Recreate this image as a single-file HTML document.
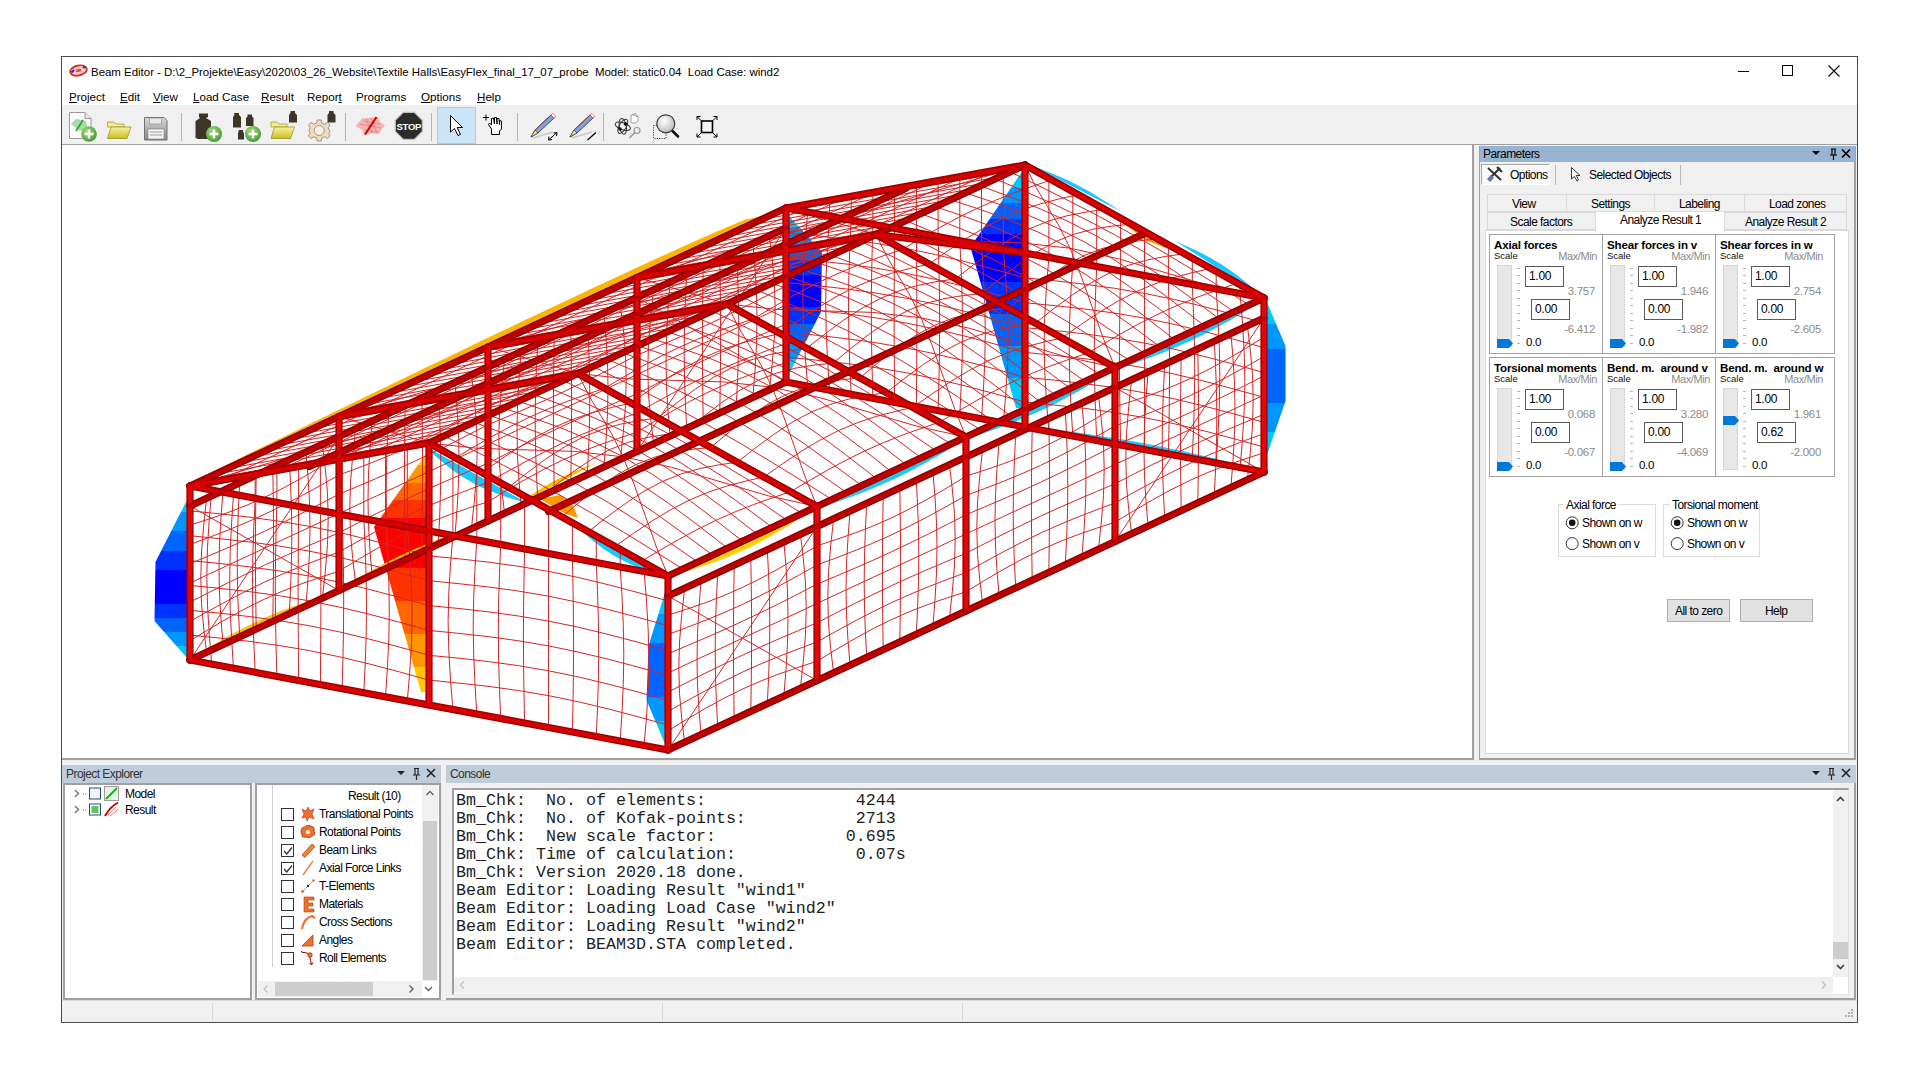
<!DOCTYPE html>
<html><head><meta charset="utf-8">
<style>
*{box-sizing:border-box;margin:0;padding:0}
html,body{width:1920px;height:1080px;overflow:hidden;background:#fff;font-family:"Liberation Sans",sans-serif;color:#000}
.a{position:absolute}
#win{position:absolute;left:61px;top:56px;width:1797px;height:967px;border:1px solid #4a4a4a;background:#f0f0f0}
.t{position:absolute;white-space:nowrap;font-size:11.6px;line-height:14px}
.n{position:absolute;white-space:nowrap;font-size:12px;line-height:14px;letter-spacing:-0.55px}
.u{text-decoration:underline}
.sep{position:absolute;top:115px;width:1px;height:24px;background:#b4b4b4}
.dockt{position:absolute;background:#bfcddb;height:17px}
.box{position:absolute;background:#fff;border-top:2px solid #a0a0a0;border-left:2px solid #a0a0a0;border-right:1px solid #e3e3e3;border-bottom:1px solid #e3e3e3}
.grp{position:absolute;border:1px solid #a0a0a0;border-radius:0}
.inp{position:absolute;width:39px;height:21px;border:1px solid #5a5a5a;background:#fff;font-size:12px;line-height:19px;padding-left:3px;letter-spacing:-0.3px}
.gr{color:#8c8c8c}
.trk{position:absolute;width:15px;height:82px;background:#e7e7e7;border:1px solid #d6d6d6}
.cb{position:absolute;width:13px;height:13px;border:1px solid #333;background:#fff}
.mono{position:absolute;font-family:"Liberation Mono",monospace;font-size:16.67px;line-height:18px;white-space:pre;color:#1e1e1e}
</style></head><body>
<div id="win"></div>
<!-- title + menu white -->
<div class="a" style="left:62px;top:57px;width:1795px;height:48px;background:#fff"></div>
<!-- app icon -->
<svg class="a" style="left:69px;top:64px" width="19" height="13" viewBox="0 0 19 13">
<ellipse cx="9.5" cy="6.5" rx="8.5" ry="5" fill="#f4c8c8" stroke="#e02010" stroke-width="1.6" transform="rotate(-12 9.5 6.5)"/>
<path d="M2.5 8.5 L5 6 M14 4 L16.5 2.5" stroke="#1030d0" stroke-width="2"/>
<ellipse cx="9.5" cy="6.5" rx="3" ry="1.5" fill="#e85050" transform="rotate(-12 9.5 6.5)"/>
</svg>
<div class="t" style="left:91px;top:65px;font-size:11.45px">Beam Editor - D:\2_Projekte\Easy\2020\03_26_Website\Textile Halls\EasyFlex_final_17_07_probe&nbsp; Model: static0.04&nbsp; Load Case: wind2</div>
<!-- window controls -->
<div class="a" style="left:1738px;top:71px;width:11px;height:1px;background:#000"></div>
<div class="a" style="left:1782px;top:65px;width:11px;height:11px;border:1px solid #000"></div>
<svg class="a" style="left:1828px;top:65px" width="12" height="12"><path d="M0.5 0.5 L11.5 11.5 M11.5 0.5 L0.5 11.5" stroke="#000" stroke-width="1.1"/></svg>
<!-- menu -->
<div class="t" style="left:69px;top:90px"><span class="u">P</span>roject</div>
<div class="t" style="left:120px;top:90px"><span class="u">E</span>dit</div>
<div class="t" style="left:153px;top:90px"><span class="u">V</span>iew</div>
<div class="t" style="left:193px;top:90px"><span class="u">L</span>oad Case</div>
<div class="t" style="left:261px;top:90px"><span class="u">R</span>esult</div>
<div class="t" style="left:307px;top:90px">Repor<span class="u">t</span></div>
<div class="t" style="left:356px;top:90px">Pro<span class="u">g</span>rams</div>
<div class="t" style="left:421px;top:90px"><span class="u">O</span>ptions</div>
<div class="t" style="left:477px;top:90px"><span class="u">H</span>elp</div>
<!-- toolbar separators -->
<div class="sep" style="left:181px;top:113px;height:28px"></div>
<div class="sep" style="left:345px;top:113px;height:28px"></div>
<div class="sep" style="left:431px;top:113px;height:28px"></div>
<div class="sep" style="left:517px;top:113px;height:28px"></div>
<div class="sep" style="left:603px;top:113px;height:28px"></div>
<div class="a" style="left:437px;top:107px;width:39px;height:37px;background:#cce4f7;border:1px solid #99d1ff"></div>
<svg class="a" style="left:0;top:0" width="740" height="146" viewBox="0 0 740 146">
<defs>
<radialGradient id="gp" cx="40%" cy="35%" r="70%"><stop offset="0" stop-color="#a8dc88"/><stop offset="1" stop-color="#3f9a2a"/></radialGradient>
<linearGradient id="fy" x1="0" y1="0" x2="0" y2="1"><stop offset="0" stop-color="#f8f4a0"/><stop offset="1" stop-color="#c8c020"/></linearGradient>
<linearGradient id="fl" x1="0" y1="0" x2="0" y2="1"><stop offset="0" stop-color="#d8d8d8"/><stop offset="1" stop-color="#8a8a8a"/></linearGradient>
<radialGradient id="mg" cx="40%" cy="35%" r="70%"><stop offset="0" stop-color="#ffffff"/><stop offset="1" stop-color="#b8b8b8"/></radialGradient>
</defs>
<!-- new -->
<path d="M69.5 112.5 H85 L91 118.5 V138.5 H69.5 Z" fill="#fdfdfd" stroke="#9a9a9a" stroke-width="1"/>
<path d="M85 112.5 V118.5 H91" fill="#e8e8e8" stroke="#9a9a9a" stroke-width="1"/>
<path d="M71 124 L76 119 L86 121 L88 128 L80 131 Z" fill="#9ad89a" opacity="0.9"/>
<path d="M76 131 L83 120" stroke="#3a9a3a" stroke-width="1.6"/>
<circle cx="89" cy="134" r="7.8" fill="url(#gp)"/>
<path d="M89 129.5 V138.5 M84.5 134 H93.5" stroke="#fff" stroke-width="2.4"/>
<!-- open -->
<path d="M107.5 122 H114 L116 124 H124 V127 H107.5 Z" fill="#f0ec90" stroke="#a8a040" stroke-width="0.8"/>
<path d="M107.5 138.5 L111 127 H131 L127 138.5 Z" fill="url(#fy)" stroke="#9a9420" stroke-width="0.8"/>
<!-- save -->
<path d="M144.5 117.5 H164 L167 120.5 V140 H144.5 Z" fill="url(#fl)" stroke="#707070" stroke-width="1"/>
<rect x="149.5" y="118" width="12" height="6" fill="#e8e8e8" stroke="#888" stroke-width="0.6"/>
<rect x="148" y="129" width="16" height="10" fill="#f4f4f4" stroke="#777" stroke-width="0.6"/>
<path d="M150 132 H162 M150 135 H162" stroke="#888" stroke-width="0.8"/>
<!-- weight + -->
<path d="M199 113.5 H208 V117 L206 118 L211 121 V138 L207 139 H198 L195.5 138 V121 L200 118 L199 117 Z" fill="#3e3528"/>
<circle cx="214" cy="134" r="8" fill="url(#gp)"/>
<path d="M214 129.5 V138.5 M209.5 134 H218.5" stroke="#fff" stroke-width="2.4"/>
<!-- weights + -->
<path d="M234 113 H239 V115 L241 117 V127.5 H233 V117 L234.5 115 Z" fill="#3e3528"/>
<path d="M247.5 114.5 H252 V116.5 L253.5 118 V126 H246 V118 L247.5 116.5 Z" fill="#3e3528"/>
<path d="M239 130 H243 V132 L244 133 V139.5 H238 V133 Z" fill="#3e3528"/>
<circle cx="253" cy="134" r="8" fill="url(#gp)"/>
<path d="M253 129.5 V138.5 M248.5 134 H257.5" stroke="#fff" stroke-width="2.4"/>
<!-- folder + weight -->
<path d="M271 122 H277 L279 124 H287 V127 H271 Z" fill="#f0ec90" stroke="#a8a040" stroke-width="0.8"/>
<path d="M271 138.5 L274.5 127 H294.5 L290.5 138.5 Z" fill="url(#fy)" stroke="#9a9420" stroke-width="0.8"/>
<path d="M290.5 111 H295 V113 L297 115 V122.5 H289 V115 L290.5 113 Z" fill="#3e3528"/>
<!-- gear + weight -->
<g transform="translate(319.2 130.5)" fill="#ecdcc4" stroke="#a88a68" stroke-width="0.9">
<path d="M-2 -10.5 H2 L2.6 -7.4 L5.6 -6.2 L8.2 -8 L10.8 -5.4 L9 -2.8 L10.2 0.2 L10.5 2 L9.5 3 L10.8 5.4 L8.2 8 L5.6 6.2 L2.6 7.4 L2 10.5 H-2 L-2.6 7.4 L-5.6 6.2 L-8.2 8 L-10.8 5.4 L-9 2.6 L-10.2 0 L-9 -2.8 L-10.8 -5.4 L-8.2 -8 L-5.6 -6.2 L-2.6 -7.4 Z"/>
<circle r="5" fill="#f0f0f0"/>
</g>
<path d="M329 111 H333.5 V113 L335.5 115 V122.5 H327.5 V115 L329 113 Z" fill="#3e3528"/>
<!-- membrane -->
<path d="M355.5 126 L362 118.5 L372 117.5 L378.5 117 L380 122 L385 125.5 L381 130 L379 134 L370 133.5 L364 135 L362 130 Z" fill="#f5a8a8" opacity="0.85"/>
<path d="M360 124 L381 128 M363 121 L380 124 M365 130 L378 132 M366 119 L372 133 M371 118 L377 133" stroke="#e06060" stroke-width="0.5"/>
<path d="M365 134.5 L376.5 117" stroke="#d00000" stroke-width="2"/>
<!-- stop -->
<path d="M403.3 112.3 H414.3 L422.3 120.3 V131.3 L414.3 139.3 H403.3 L395.3 131.3 V120.3 Z" fill="#2b2b2b" stroke="#bdbdbd" stroke-width="1.2"/>
<text x="408.8" y="130" font-family="Liberation Sans" font-weight="bold" font-size="9.5" fill="#fff" text-anchor="middle" letter-spacing="-0.3">STOP</text>
<!-- arrow -->
<path d="M450.5 115.5 V132 L454.5 128.5 L458 135.5 L460.5 134.5 L457.2 127.5 L462.5 127.5 Z" fill="#fff" stroke="#000" stroke-width="1"/>
<!-- hand -->
<path d="M483 117.5 H489 M486 114.5 V120.5" stroke="#000" stroke-width="1"/>
<path d="M491.5 134.5 V129 L488.5 124.5 L489.5 123 L491.5 125 V118.5 L493.5 118 L494.5 124 V117.5 L496.5 117.5 L497 124 V118.5 L499 118.5 L499.5 124.5 V120.5 L501.5 121 V129 L499.5 131 V134.5 Z" fill="#fff" stroke="#000" stroke-width="1"/>
<!-- pencils -->
<g>
<path d="M531 137 L535 130 L551 115 L554 118 L538 133 Z" fill="#7fa0d8" stroke="#303030" stroke-width="0.8"/>
<path d="M535 130 L550.5 115.5" stroke="#b03030" stroke-width="0.9"/>
<path d="M531 137 L538 133 L535 130 Z" fill="#e8d8a0" stroke="#303030" stroke-width="0.6"/>
<path d="M551 115 L553 113.5 L556 116.5 L554 118 Z" fill="#fff" stroke="#c03030" stroke-width="0.6"/>
<path d="M533 138 L553 132" stroke="#c8c8c8" stroke-width="1.6"/>
<path d="M548.5 140 L557 132.5 M548.5 140 L549 136.5 M548.5 140 L552 139.6 M557 132.5 L553.5 133 M557 132.5 L556.6 136" stroke="#000" stroke-width="1"/>
</g>
<g transform="translate(39 0)">
<path d="M531 137 L535 130 L551 115 L554 118 L538 133 Z" fill="#7fa0d8" stroke="#303030" stroke-width="0.8"/>
<path d="M535 130 L550.5 115.5" stroke="#b03030" stroke-width="0.9"/>
<path d="M531 137 L538 133 L535 130 Z" fill="#e8d8a0" stroke="#303030" stroke-width="0.6"/>
<path d="M551 115 L553 113.5 L556 116.5 L554 118 Z" fill="#fff" stroke="#c03030" stroke-width="0.6"/>
<path d="M533 138 L553 132" stroke="#c8c8c8" stroke-width="1.6"/>
<path d="M548.5 140 L557 132.5" stroke="#000" stroke-width="1.2"/>
</g>
<!-- orbit -->
<g fill="none" stroke="#333" stroke-width="1">
<ellipse cx="622.8" cy="126.3" rx="8" ry="3.5" transform="rotate(20 622.8 126.3)"/>
<ellipse cx="622.8" cy="126.3" rx="8" ry="3.5" transform="rotate(-60 622.8 126.3)"/>
<ellipse cx="622.8" cy="126.3" rx="8" ry="3.5" transform="rotate(80 622.8 126.3)"/>
</g>
<circle cx="625.5" cy="124" r="1.8" fill="#111"/><circle cx="620" cy="129" r="1.8" fill="#111"/>
<path d="M631 122 V116 L632.5 114 L634 116 V113.5 L636 114 V116.5 L638 116 V121 L636 123 H632 Z" fill="#fff" stroke="#777" stroke-width="0.7"/>
<circle cx="637" cy="130.5" r="3" fill="none" stroke="#999" stroke-width="1.2"/>
<path d="M635 132.5 L629.5 138" stroke="#999" stroke-width="1.4"/>
<!-- zoom -->
<rect x="653.5" y="125.5" width="12.5" height="13" fill="none" stroke="#333" stroke-width="0.9" stroke-dasharray="1.2 1.2"/>
<path d="M671.5 130 L678 136.5" stroke="#111" stroke-width="2.6" stroke-linecap="round"/>
<circle cx="665.8" cy="123.8" r="9" fill="url(#mg)" stroke="#3a3a3a" stroke-width="1.2"/>
<!-- fit -->
<rect x="701.5" y="121" width="11" height="11.5" fill="#f4f4f4" stroke="#000" stroke-width="1.6"/>
<path d="M701 120.5 L697 116.5 M697 116.5 V120 M697 116.5 H700.5 M713 120.5 L717 116.5 M717 116.5 V120 M717 116.5 H713.5 M701 133 L697 137 M697 137 V133.5 M697 137 H700.5 M713 133 L717 137 M717 137 V133.5 M717 137 H713.5" stroke="#000" stroke-width="1"/>
</svg>
<!-- toolbar bottom line -->
<div class="a" style="left:62px;top:144px;width:1795px;height:1px;background:#a0a0a0"></div>
<!-- viewport -->
<div class="a" style="left:62px;top:145px;width:1412px;height:615px;background:#fff;border-right:2px solid #a0a0a0;border-bottom:2px solid #a0a0a0"></div>
<svg class="a" style="left:0;top:0" width="1474" height="760" viewBox="0 0 1474 760">
<defs><linearGradient id="dA" gradientUnits="userSpaceOnUse" x1="190.0" y1="492.0" x2="190.0" y2="660.0"><stop offset="0.0000" stop-color="#00c8ff"/><stop offset="0.1167" stop-color="#00c8ff"/><stop offset="0.1167" stop-color="#0096ff"/><stop offset="0.2333" stop-color="#0096ff"/><stop offset="0.2333" stop-color="#0064ff"/><stop offset="0.3500" stop-color="#0064ff"/><stop offset="0.3500" stop-color="#0032ff"/><stop offset="0.4667" stop-color="#0032ff"/><stop offset="0.4667" stop-color="#0000ff"/><stop offset="0.5833" stop-color="#0000ff"/><stop offset="0.5833" stop-color="#0000ff"/><stop offset="0.6667" stop-color="#0000ff"/><stop offset="0.6667" stop-color="#0032ff"/><stop offset="0.7500" stop-color="#0032ff"/><stop offset="0.7500" stop-color="#0064ff"/><stop offset="0.8333" stop-color="#0064ff"/><stop offset="0.8333" stop-color="#0096ff"/><stop offset="0.9167" stop-color="#0096ff"/><stop offset="0.9167" stop-color="#00c8ff"/><stop offset="1.0000" stop-color="#00c8ff"/></linearGradient>
<linearGradient id="dR" gradientUnits="userSpaceOnUse" x1="430.0" y1="448.0" x2="430.0" y2="700.0"><stop offset="0.0000" stop-color="#ffc800"/><stop offset="0.0690" stop-color="#ffc800"/><stop offset="0.0690" stop-color="#ff9600"/><stop offset="0.1381" stop-color="#ff9600"/><stop offset="0.1381" stop-color="#ff6400"/><stop offset="0.2071" stop-color="#ff6400"/><stop offset="0.2071" stop-color="#ff3200"/><stop offset="0.2762" stop-color="#ff3200"/><stop offset="0.2762" stop-color="#ff0000"/><stop offset="0.3452" stop-color="#ff0000"/><stop offset="0.3452" stop-color="#ff0000"/><stop offset="0.4762" stop-color="#ff0000"/><stop offset="0.4762" stop-color="#ff3200"/><stop offset="0.6071" stop-color="#ff3200"/><stop offset="0.6071" stop-color="#ff6400"/><stop offset="0.7381" stop-color="#ff6400"/><stop offset="0.7381" stop-color="#ff9600"/><stop offset="0.8690" stop-color="#ff9600"/><stop offset="0.8690" stop-color="#ffc800"/><stop offset="1.0000" stop-color="#ffc800"/></linearGradient>
<linearGradient id="dD" gradientUnits="userSpaceOnUse" x1="668.0" y1="585.0" x2="668.0" y2="746.0"><stop offset="0.0000" stop-color="#00c8ff"/><stop offset="0.1801" stop-color="#00c8ff"/><stop offset="0.1801" stop-color="#0096ff"/><stop offset="0.3602" stop-color="#0096ff"/><stop offset="0.3602" stop-color="#0064ff"/><stop offset="0.5404" stop-color="#0064ff"/><stop offset="0.5404" stop-color="#0064ff"/><stop offset="0.6936" stop-color="#0064ff"/><stop offset="0.6936" stop-color="#0096ff"/><stop offset="0.8468" stop-color="#0096ff"/><stop offset="0.8468" stop-color="#00c8ff"/><stop offset="1.0000" stop-color="#00c8ff"/></linearGradient>
<linearGradient id="dF" gradientUnits="userSpaceOnUse" x1="1264.0" y1="298.0" x2="1264.0" y2="460.0"><stop offset="0.0000" stop-color="#00c8ff"/><stop offset="0.1584" stop-color="#00c8ff"/><stop offset="0.1584" stop-color="#0096ff"/><stop offset="0.3169" stop-color="#0096ff"/><stop offset="0.3169" stop-color="#0064ff"/><stop offset="0.4753" stop-color="#0064ff"/><stop offset="0.4753" stop-color="#0064ff"/><stop offset="0.6502" stop-color="#0064ff"/><stop offset="0.6502" stop-color="#0096ff"/><stop offset="0.8251" stop-color="#0096ff"/><stop offset="0.8251" stop-color="#00c8ff"/><stop offset="1.0000" stop-color="#00c8ff"/></linearGradient>
<linearGradient id="dH" gradientUnits="userSpaceOnUse" x1="786.0" y1="214.0" x2="786.0" y2="376.0"><stop offset="0.0000" stop-color="#00c8ff"/><stop offset="0.0938" stop-color="#00c8ff"/><stop offset="0.0938" stop-color="#0096ff"/><stop offset="0.1877" stop-color="#0096ff"/><stop offset="0.1877" stop-color="#0064ff"/><stop offset="0.2815" stop-color="#0064ff"/><stop offset="0.2815" stop-color="#0032ff"/><stop offset="0.3753" stop-color="#0032ff"/><stop offset="0.3753" stop-color="#0000ff"/><stop offset="0.4691" stop-color="#0000ff"/><stop offset="0.4691" stop-color="#0000ff"/><stop offset="0.5753" stop-color="#0000ff"/><stop offset="0.5753" stop-color="#0032ff"/><stop offset="0.6815" stop-color="#0032ff"/><stop offset="0.6815" stop-color="#0064ff"/><stop offset="0.7877" stop-color="#0064ff"/><stop offset="0.7877" stop-color="#0096ff"/><stop offset="0.8938" stop-color="#0096ff"/><stop offset="0.8938" stop-color="#00c8ff"/><stop offset="1.0000" stop-color="#00c8ff"/></linearGradient>
<linearGradient id="dG" gradientUnits="userSpaceOnUse" x1="1022.0" y1="172.0" x2="1022.0" y2="410.0"><stop offset="0.0000" stop-color="#00c8ff"/><stop offset="0.0655" stop-color="#00c8ff"/><stop offset="0.0655" stop-color="#0096ff"/><stop offset="0.1311" stop-color="#0096ff"/><stop offset="0.1311" stop-color="#0064ff"/><stop offset="0.1966" stop-color="#0064ff"/><stop offset="0.1966" stop-color="#0032ff"/><stop offset="0.2622" stop-color="#0032ff"/><stop offset="0.2622" stop-color="#0000ff"/><stop offset="0.3277" stop-color="#0000ff"/><stop offset="0.3277" stop-color="#0000ff"/><stop offset="0.4622" stop-color="#0000ff"/><stop offset="0.4622" stop-color="#0032ff"/><stop offset="0.5966" stop-color="#0032ff"/><stop offset="0.5966" stop-color="#0064ff"/><stop offset="0.7311" stop-color="#0064ff"/><stop offset="0.7311" stop-color="#0096ff"/><stop offset="0.8655" stop-color="#0096ff"/><stop offset="0.8655" stop-color="#00c8ff"/><stop offset="1.0000" stop-color="#00c8ff"/></linearGradient></defs>
<polygon points="190,494 155.5,562 154.5,621 187,658 191,658" fill="url(#dA)"/>
<polygon points="430,448 374,527 421,692 430,692" fill="url(#dR)"/>
<polygon points="667,586 648.5,646 646.5,700 665,744 668,744" fill="url(#dD)"/>
<polygon points="1266,300 1285.5,346 1285.5,401 1266,458" fill="url(#dF)"/>
<polygon points="789,216 822,252 821,312 789,374" fill="url(#dH)"/>
<polygon points="1021,173 970.5,247 1016,408 1023,408 1023,173" fill="url(#dG)"/>
<polygon points="200.9,478.2 214.9,471.6 228.9,465.1 242.9,458.6 256.9,452.0 270.9,445.5 284.9,439.0 298.9,432.4 312.9,425.9 326.9,419.4 340.9,412.8 354.9,406.3 368.9,399.8 382.9,393.2 396.9,386.7 411.0,380.2 425.0,373.6 439.0,367.1 453.0,360.6 467.0,354.0 481.0,347.5 495.0,341.0 509.0,334.4 523.0,327.9 537.0,321.4 551.0,314.8 565.0,308.3 579.0,301.8 593.0,295.3 607.0,288.7 621.0,282.2 635.0,275.7 649.1,269.1 663.1,262.6 677.1,256.1 691.1,249.5 705.1,243.0 719.1,236.5 733.1,229.9 747.1,223.4 761.1,216.9 760.9,216.4 745.3,219.6 731.0,225.4 716.8,231.5 702.6,237.7 688.5,244.0 674.4,250.4 660.4,256.8 646.3,263.3 632.3,269.7 618.3,276.2 604.3,282.8 590.3,289.3 576.3,295.9 562.3,302.5 548.3,309.1 534.3,315.7 520.4,322.3 506.4,328.9 492.5,335.6 478.5,342.3 464.6,349.0 450.7,355.7 436.7,362.4 422.8,369.1 408.9,375.8 395.0,382.5 381.1,389.3 367.2,396.0 353.3,402.8 339.4,409.5 325.5,416.3 311.6,423.1 297.7,429.9 283.8,436.7 270.0,443.5 256.1,450.3 242.2,457.1 228.3,464.0 214.5,470.8 200.7,477.7" fill="#ffb400"/>
<polygon points="201.9,651.4 212.7,645.0 223.6,638.7 234.5,632.7 245.6,626.9 256.8,621.4 268.3,616.3 279.8,611.5 291.5,607.1 303.3,602.8 315.2,598.6" fill="#ffc000"/>
<polygon points="350.9,581.9 361.3,576.1 371.6,570.3 382.1,564.7 392.6,559.3 403.3,554.2 414.1,549.3 425.0,544.7 436.0,540.3 447.1,536.1 458.2,531.9" fill="#ffc000"/>
<polygon points="423.0,445.0 432.2,453.3 441.5,461.3 451.1,468.9 461.0,475.9 471.4,482.1 482.1,487.6 493.3,492.3 504.8,496.4 516.6,500.1 528.5,503.5" fill="#18c8ff"/>
<polygon points="573.5,523.5 581.0,530.5 588.7,537.3 596.6,543.8 604.7,549.8 613.2,555.3 622.0,560.1 631.2,564.4 640.6,568.2 650.2,571.7 660.0,575.0" fill="#18c8ff"/>
<polygon points="514.0,507.0 521.6,501.5 529.3,496.1 537.1,490.9 545.0,486.0 553.1,481.5 561.4,477.2 569.9,473.3 578.5,469.7 587.2,466.3 596.0,463.0" fill="#ffc000"/>
<polygon points="540,499 560,495 572,503 578,518 566,514 552,506" fill="#ff9a00"/>
<polygon points="828.9,504.9 842.0,500.2 854.9,495.4 867.8,490.4 880.6,485.0 893.2,479.4 905.6,473.4 917.9,467.0 930.0,460.4 942.1,453.5 954.1,446.6" fill="#18c8ff"/>
<polygon points="977.9,435.4 991.0,430.7 1003.9,425.9 1016.8,420.9 1029.6,415.5 1042.2,409.9 1054.6,403.9 1066.9,397.5 1079.0,390.9 1091.1,384.0 1103.1,377.1" fill="#18c8ff"/>
<polygon points="1126.9,365.9 1140.0,361.2 1152.9,356.4 1165.8,351.4 1178.6,346.0 1191.2,340.4 1203.6,334.4 1215.9,328.0 1228.0,321.4 1240.1,314.5 1252.1,307.6" fill="#18c8ff"/>
<polygon points="685.9,571.7 697.9,567.8 709.8,563.8 721.6,559.5 733.2,554.8 744.6,549.8 755.8,544.3 766.9,538.4 777.7,532.1 788.4,525.5 799.1,518.8" fill="#ffd000"/>
<polygon points="1033.0,166.0 1042.2,169.5 1051.3,173.2 1060.4,177.0 1069.3,181.0 1078.1,185.4 1086.7,190.0 1095.2,195.0 1103.5,200.2 1111.8,205.5 1120.0,211.0" fill="#18c8ff"/>
<polygon points="1175.0,241.0 1184.5,245.2 1194.0,249.5 1203.3,254.1 1212.3,259.0 1221.2,264.3 1229.7,270.0 1238.1,276.1 1246.2,282.5 1254.1,289.2 1262.0,296.0" fill="#18c8ff"/>
<polygon points="1118,219 1140,225 1168,249 1145,240" fill="#ff9600"/>
<polygon points="1048.9,428.5 1068.2,431.2 1087.5,434.0 1106.7,436.9 1125.9,440.1 1145.1,443.6 1164.1,447.3 1183.2,451.3 1202.2,455.6 1221.2,460.0 1240.1,464.5" fill="#18c8ff"/>
<g stroke="#d42424" stroke-width="1" fill="none">
<polyline points="206.6,652.3 203.7,628.0 201.5,603.3 200.8,578.0 201.5,552.0 203.7,525.3 206.6,498.3"/>
<polyline points="223.1,644.6 221.0,619.9 219.5,594.9 219.0,569.5 219.5,543.6 221.0,517.2 223.1,490.6"/>
<polyline points="239.7,636.8 238.4,611.7 237.5,586.5 237.2,561.0 237.5,535.2 238.4,509.1 239.7,482.8"/>
<polyline points="256.2,629.1 255.8,603.6 255.5,578.1 255.4,552.5 255.5,526.8 255.8,501.0 256.2,475.1"/>
<polyline points="272.8,621.4 273.2,595.5 273.5,569.7 273.6,544.0 273.5,518.4 273.2,492.9 272.8,467.4"/>
<polyline points="289.3,613.7 290.6,587.4 291.5,561.3 291.8,535.5 291.5,510.0 290.6,484.8 289.3,459.7"/>
<polyline points="305.9,605.9 308.0,579.3 309.5,552.9 310.0,527.0 309.5,501.6 308.0,476.6 305.9,451.9"/>
<polyline points="322.4,598.2 325.3,571.2 327.5,544.5 328.2,518.5 327.5,493.2 325.3,468.5 322.4,444.2"/>
<polyline points="190.0,640.8 208.6,629.4 227.2,618.5 245.9,608.3 264.5,599.1 283.1,590.9 301.8,583.7 320.4,577.3 339.0,571.2"/>
<polyline points="190.0,621.5 208.6,611.0 227.2,600.9 245.9,591.2 264.5,582.1 283.1,573.8 301.8,566.1 320.4,558.9 339.0,552.0"/>
<polyline points="190.0,602.2 208.6,592.7 227.2,583.2 245.9,574.1 264.5,565.2 283.1,556.7 301.8,548.5 320.4,540.6 339.0,532.8"/>
<polyline points="190.0,583.0 208.6,574.3 227.2,565.6 245.9,556.9 264.5,548.2 283.1,539.6 301.8,530.9 320.4,522.2 339.0,513.5"/>
<polyline points="190.0,563.8 208.6,555.9 227.2,548.0 245.9,539.8 264.5,531.3 283.1,522.4 301.8,513.3 320.4,503.8 339.0,494.2"/>
<polyline points="190.0,544.5 208.6,537.6 227.2,530.4 245.9,522.7 264.5,514.4 283.1,505.3 301.8,495.6 320.4,485.5 339.0,475.0"/>
<polyline points="190.0,525.2 208.6,519.2 227.2,512.8 245.9,505.6 264.5,497.4 283.1,488.2 301.8,478.0 320.4,467.1 339.0,455.8"/>
<polyline points="190.0,660.0 339.0,436.5"/>
<polyline points="190.0,506.0 339.0,590.5"/>
<polyline points="355.6,582.8 352.7,558.5 350.5,533.8 349.8,508.5 350.5,482.5 352.7,455.8 355.6,428.8"/>
<polyline points="372.1,575.1 370.0,550.4 368.5,525.4 368.0,500.0 368.5,474.1 370.0,447.7 372.1,421.1"/>
<polyline points="388.7,567.3 387.4,542.2 386.5,517.0 386.2,491.5 386.5,465.7 387.4,439.6 388.7,413.3"/>
<polyline points="405.2,559.6 404.8,534.1 404.5,508.6 404.4,483.0 404.5,457.3 404.8,431.5 405.2,405.6"/>
<polyline points="421.8,551.9 422.2,526.0 422.5,500.2 422.6,474.5 422.5,448.9 422.2,423.4 421.8,397.9"/>
<polyline points="438.3,544.2 439.6,517.9 440.5,491.8 440.8,466.0 440.5,440.5 439.6,415.3 438.3,390.2"/>
<polyline points="454.9,536.4 457.0,509.8 458.5,483.4 459.0,457.5 458.5,432.1 457.0,407.1 454.9,382.4"/>
<polyline points="471.4,528.7 474.3,501.7 476.5,475.0 477.2,449.0 476.5,423.7 474.3,399.0 471.4,374.7"/>
<polyline points="339.0,571.2 357.6,559.9 376.2,549.0 394.9,538.8 413.5,529.6 432.1,521.4 450.8,514.2 469.4,507.8 488.0,501.8"/>
<polyline points="339.0,552.0 357.6,541.5 376.2,531.4 394.9,521.7 413.5,512.6 432.1,504.3 450.8,496.6 469.4,489.4 488.0,482.5"/>
<polyline points="339.0,532.8 357.6,523.2 376.2,513.7 394.9,504.6 413.5,495.7 432.1,487.2 450.8,479.0 469.4,471.1 488.0,463.2"/>
<polyline points="339.0,513.5 357.6,504.8 376.2,496.1 394.9,487.4 413.5,478.8 432.1,470.1 450.8,461.4 469.4,452.7 488.0,444.0"/>
<polyline points="339.0,494.2 357.6,486.4 376.2,478.5 394.9,470.3 413.5,461.8 432.1,452.9 450.8,443.8 469.4,434.3 488.0,424.8"/>
<polyline points="339.0,475.0 357.6,468.1 376.2,460.9 394.9,453.2 413.5,444.9 432.1,435.8 450.8,426.1 469.4,416.0 488.0,405.5"/>
<polyline points="339.0,455.8 357.6,449.7 376.2,443.3 394.9,436.1 413.5,427.9 432.1,418.7 450.8,408.5 469.4,397.6 488.0,386.2"/>
<polyline points="504.6,513.3 501.7,489.0 499.5,464.3 498.8,439.0 499.5,413.0 501.7,386.3 504.6,359.3"/>
<polyline points="521.1,505.6 519.0,480.9 517.5,455.9 517.0,430.5 517.5,404.6 519.0,378.2 521.1,351.6"/>
<polyline points="537.7,497.8 536.4,472.7 535.5,447.5 535.2,422.0 535.5,396.2 536.4,370.1 537.7,343.8"/>
<polyline points="554.2,490.1 553.8,464.6 553.5,439.1 553.4,413.5 553.5,387.8 553.8,362.0 554.2,336.1"/>
<polyline points="570.8,482.4 571.2,456.5 571.5,430.7 571.6,405.0 571.5,379.4 571.2,353.9 570.8,328.4"/>
<polyline points="587.3,474.7 588.6,448.4 589.5,422.3 589.8,396.5 589.5,371.0 588.6,345.8 587.3,320.7"/>
<polyline points="603.9,466.9 606.0,440.3 607.5,413.9 608.0,388.0 607.5,362.6 606.0,337.6 603.9,312.9"/>
<polyline points="620.4,459.2 623.3,432.2 625.5,405.5 626.2,379.5 625.5,354.2 623.3,329.5 620.4,305.2"/>
<polyline points="488.0,501.8 506.6,490.4 525.2,479.5 543.9,469.3 562.5,460.1 581.1,451.9 599.8,444.7 618.4,438.3 637.0,432.2"/>
<polyline points="488.0,482.5 506.6,472.0 525.2,461.9 543.9,452.2 562.5,443.1 581.1,434.8 599.8,427.1 618.4,419.9 637.0,413.0"/>
<polyline points="488.0,463.2 506.6,453.7 525.2,444.2 543.9,435.1 562.5,426.2 581.1,417.7 599.8,409.5 618.4,401.6 637.0,393.8"/>
<polyline points="488.0,444.0 506.6,435.3 525.2,426.6 543.9,417.9 562.5,409.2 581.1,400.6 599.8,391.9 618.4,383.2 637.0,374.5"/>
<polyline points="488.0,424.8 506.6,416.9 525.2,409.0 543.9,400.8 562.5,392.3 581.1,383.4 599.8,374.3 618.4,364.8 637.0,355.2"/>
<polyline points="488.0,405.5 506.6,398.6 525.2,391.4 543.9,383.7 562.5,375.4 581.1,366.3 599.8,356.6 618.4,346.5 637.0,336.0"/>
<polyline points="488.0,386.2 506.6,380.2 525.2,373.8 543.9,366.6 562.5,358.4 581.1,349.2 599.8,339.0 618.4,328.1 637.0,316.8"/>
<polyline points="653.6,443.8 650.7,419.5 648.5,394.8 647.8,369.5 648.5,343.5 650.7,316.8 653.6,289.8"/>
<polyline points="670.1,436.1 668.0,411.4 666.5,386.4 666.0,361.0 666.5,335.1 668.0,308.7 670.1,282.1"/>
<polyline points="686.7,428.3 685.4,403.2 684.5,378.0 684.2,352.5 684.5,326.7 685.4,300.6 686.7,274.3"/>
<polyline points="703.2,420.6 702.8,395.1 702.5,369.6 702.4,344.0 702.5,318.3 702.8,292.5 703.2,266.6"/>
<polyline points="719.8,412.9 720.2,387.0 720.5,361.2 720.6,335.5 720.5,309.9 720.2,284.4 719.8,258.9"/>
<polyline points="736.3,405.2 737.6,378.9 738.5,352.8 738.8,327.0 738.5,301.5 737.6,276.3 736.3,251.2"/>
<polyline points="752.9,397.4 755.0,370.8 756.5,344.4 757.0,318.5 756.5,293.1 755.0,268.1 752.9,243.4"/>
<polyline points="769.4,389.7 772.3,362.7 774.5,336.0 775.2,310.0 774.5,284.7 772.3,260.0 769.4,235.7"/>
<polyline points="637.0,432.2 655.6,420.9 674.2,410.0 692.9,399.8 711.5,390.6 730.1,382.4 748.8,375.2 767.4,368.8 786.0,362.8"/>
<polyline points="637.0,413.0 655.6,402.5 674.2,392.4 692.9,382.7 711.5,373.6 730.1,365.3 748.8,357.6 767.4,350.4 786.0,343.5"/>
<polyline points="637.0,393.8 655.6,384.2 674.2,374.7 692.9,365.6 711.5,356.7 730.1,348.2 748.8,340.0 767.4,332.1 786.0,324.2"/>
<polyline points="637.0,374.5 655.6,365.8 674.2,357.1 692.9,348.4 711.5,339.8 730.1,331.1 748.8,322.4 767.4,313.7 786.0,305.0"/>
<polyline points="637.0,355.2 655.6,347.4 674.2,339.5 692.9,331.3 711.5,322.8 730.1,313.9 748.8,304.8 767.4,295.3 786.0,285.8"/>
<polyline points="637.0,336.0 655.6,329.1 674.2,321.9 692.9,314.2 711.5,305.9 730.1,296.8 748.8,287.1 767.4,277.0 786.0,266.5"/>
<polyline points="637.0,316.8 655.6,310.7 674.2,304.3 692.9,297.1 711.5,288.9 730.1,279.7 748.8,269.5 767.4,258.6 786.0,247.2"/>
<polyline points="637.0,451.5 786.0,228.0"/>
<polyline points="637.0,297.5 786.0,382.0"/>
<polyline points="684.6,742.3 681.7,718.0 679.5,693.3 678.8,668.0 679.5,642.0 681.7,615.3 684.6,588.3"/>
<polyline points="701.1,734.6 699.0,709.9 697.5,684.9 697.0,659.5 697.5,633.6 699.0,607.2 701.1,580.6"/>
<polyline points="717.7,726.8 716.4,701.7 715.5,676.5 715.2,651.0 715.5,625.2 716.4,599.1 717.7,572.8"/>
<polyline points="734.2,719.1 733.8,693.6 733.5,668.1 733.4,642.5 733.5,616.8 733.8,591.0 734.2,565.1"/>
<polyline points="750.8,711.4 751.2,685.5 751.5,659.7 751.6,634.0 751.5,608.4 751.2,582.9 750.8,557.4"/>
<polyline points="767.3,703.7 768.6,677.4 769.5,651.3 769.8,625.5 769.5,600.0 768.6,574.8 767.3,549.7"/>
<polyline points="783.9,695.9 786.0,669.3 787.5,642.9 788.0,617.0 787.5,591.6 786.0,566.6 783.9,541.9"/>
<polyline points="800.4,688.2 803.3,661.2 805.5,634.5 806.2,608.5 805.5,583.2 803.3,558.5 800.4,534.2"/>
<polyline points="668.0,730.8 686.6,719.4 705.2,708.5 723.9,698.3 742.5,689.1 761.1,680.9 779.8,673.7 798.4,667.3 817.0,661.2"/>
<polyline points="668.0,711.5 686.6,701.0 705.2,690.9 723.9,681.2 742.5,672.1 761.1,663.8 779.8,656.1 798.4,648.9 817.0,642.0"/>
<polyline points="668.0,692.2 686.6,682.7 705.2,673.2 723.9,664.1 742.5,655.2 761.1,646.7 779.8,638.5 798.4,630.6 817.0,622.8"/>
<polyline points="668.0,673.0 686.6,664.3 705.2,655.6 723.9,646.9 742.5,638.2 761.1,629.6 779.8,620.9 798.4,612.2 817.0,603.5"/>
<polyline points="668.0,653.8 686.6,645.9 705.2,638.0 723.9,629.8 742.5,621.3 761.1,612.4 779.8,603.3 798.4,593.8 817.0,584.2"/>
<polyline points="668.0,634.5 686.6,627.6 705.2,620.4 723.9,612.7 742.5,604.4 761.1,595.3 779.8,585.6 798.4,575.5 817.0,565.0"/>
<polyline points="668.0,615.2 686.6,609.2 705.2,602.8 723.9,595.6 742.5,587.4 761.1,578.2 779.8,568.0 798.4,557.1 817.0,545.8"/>
<polyline points="668.0,750.0 817.0,526.5"/>
<polyline points="668.0,596.0 817.0,680.5"/>
<polyline points="833.6,672.8 830.7,648.5 828.5,623.8 827.8,598.5 828.5,572.5 830.7,545.8 833.6,518.8"/>
<polyline points="850.1,665.1 848.0,640.4 846.5,615.4 846.0,590.0 846.5,564.1 848.0,537.7 850.1,511.1"/>
<polyline points="866.7,657.3 865.4,632.2 864.5,607.0 864.2,581.5 864.5,555.7 865.4,529.6 866.7,503.3"/>
<polyline points="883.2,649.6 882.8,624.1 882.5,598.6 882.4,573.0 882.5,547.3 882.8,521.5 883.2,495.6"/>
<polyline points="899.8,641.9 900.2,616.0 900.5,590.2 900.6,564.5 900.5,538.9 900.2,513.4 899.8,487.9"/>
<polyline points="916.3,634.2 917.6,607.9 918.5,581.8 918.8,556.0 918.5,530.5 917.6,505.3 916.3,480.2"/>
<polyline points="932.9,626.4 935.0,599.8 936.5,573.4 937.0,547.5 936.5,522.1 935.0,497.1 932.9,472.4"/>
<polyline points="949.4,618.7 952.3,591.7 954.5,565.0 955.2,539.0 954.5,513.7 952.3,489.0 949.4,464.7"/>
<polyline points="817.0,661.2 835.6,649.9 854.2,639.0 872.9,628.8 891.5,619.6 910.1,611.4 928.8,604.2 947.4,597.8 966.0,591.8"/>
<polyline points="817.0,642.0 835.6,631.5 854.2,621.4 872.9,611.7 891.5,602.6 910.1,594.3 928.8,586.6 947.4,579.4 966.0,572.5"/>
<polyline points="817.0,622.8 835.6,613.2 854.2,603.7 872.9,594.6 891.5,585.7 910.1,577.2 928.8,569.0 947.4,561.1 966.0,553.2"/>
<polyline points="817.0,603.5 835.6,594.8 854.2,586.1 872.9,577.4 891.5,568.8 910.1,560.1 928.8,551.4 947.4,542.7 966.0,534.0"/>
<polyline points="817.0,584.2 835.6,576.4 854.2,568.5 872.9,560.3 891.5,551.8 910.1,542.9 928.8,533.8 947.4,524.3 966.0,514.8"/>
<polyline points="817.0,565.0 835.6,558.1 854.2,550.9 872.9,543.2 891.5,534.9 910.1,525.8 928.8,516.1 947.4,506.0 966.0,495.5"/>
<polyline points="817.0,545.8 835.6,539.7 854.2,533.3 872.9,526.1 891.5,517.9 910.1,508.7 928.8,498.5 947.4,487.6 966.0,476.2"/>
<polyline points="982.6,603.3 979.7,579.0 977.5,554.3 976.8,529.0 977.5,503.0 979.7,476.3 982.6,449.3"/>
<polyline points="999.1,595.6 997.0,570.9 995.5,545.9 995.0,520.5 995.5,494.6 997.0,468.2 999.1,441.6"/>
<polyline points="1015.7,587.8 1014.4,562.7 1013.5,537.5 1013.2,512.0 1013.5,486.2 1014.4,460.1 1015.7,433.8"/>
<polyline points="1032.2,580.1 1031.8,554.6 1031.5,529.1 1031.4,503.5 1031.5,477.8 1031.8,452.0 1032.2,426.1"/>
<polyline points="1048.8,572.4 1049.2,546.5 1049.5,520.7 1049.6,495.0 1049.5,469.4 1049.2,443.9 1048.8,418.4"/>
<polyline points="1065.3,564.7 1066.6,538.4 1067.5,512.3 1067.8,486.5 1067.5,461.0 1066.6,435.8 1065.3,410.7"/>
<polyline points="1081.9,556.9 1084.0,530.3 1085.5,503.9 1086.0,478.0 1085.5,452.6 1084.0,427.6 1081.9,402.9"/>
<polyline points="1098.4,549.2 1101.3,522.2 1103.5,495.5 1104.2,469.5 1103.5,444.2 1101.3,419.5 1098.4,395.2"/>
<polyline points="966.0,591.8 984.6,580.4 1003.2,569.5 1021.9,559.3 1040.5,550.1 1059.1,541.9 1077.8,534.7 1096.4,528.3 1115.0,522.2"/>
<polyline points="966.0,572.5 984.6,562.0 1003.2,551.9 1021.9,542.2 1040.5,533.1 1059.1,524.8 1077.8,517.1 1096.4,509.9 1115.0,503.0"/>
<polyline points="966.0,553.2 984.6,543.7 1003.2,534.2 1021.9,525.1 1040.5,516.2 1059.1,507.7 1077.8,499.5 1096.4,491.6 1115.0,483.8"/>
<polyline points="966.0,534.0 984.6,525.3 1003.2,516.6 1021.9,507.9 1040.5,499.2 1059.1,490.6 1077.8,481.9 1096.4,473.2 1115.0,464.5"/>
<polyline points="966.0,514.8 984.6,506.9 1003.2,499.0 1021.9,490.8 1040.5,482.3 1059.1,473.4 1077.8,464.3 1096.4,454.8 1115.0,445.2"/>
<polyline points="966.0,495.5 984.6,488.6 1003.2,481.4 1021.9,473.7 1040.5,465.4 1059.1,456.3 1077.8,446.6 1096.4,436.5 1115.0,426.0"/>
<polyline points="966.0,476.2 984.6,470.2 1003.2,463.8 1021.9,456.6 1040.5,448.4 1059.1,439.2 1077.8,429.0 1096.4,418.1 1115.0,406.8"/>
<polyline points="1131.6,533.8 1128.7,509.5 1126.5,484.8 1125.8,459.5 1126.5,433.5 1128.7,406.8 1131.6,379.8"/>
<polyline points="1148.1,526.1 1146.0,501.4 1144.5,476.4 1144.0,451.0 1144.5,425.1 1146.0,398.7 1148.1,372.1"/>
<polyline points="1164.7,518.3 1163.4,493.2 1162.5,468.0 1162.2,442.5 1162.5,416.7 1163.4,390.6 1164.7,364.3"/>
<polyline points="1181.2,510.6 1180.8,485.1 1180.5,459.6 1180.4,434.0 1180.5,408.3 1180.8,382.5 1181.2,356.6"/>
<polyline points="1197.8,502.9 1198.2,477.0 1198.5,451.2 1198.6,425.5 1198.5,399.9 1198.2,374.4 1197.8,348.9"/>
<polyline points="1214.3,495.2 1215.6,468.9 1216.5,442.8 1216.8,417.0 1216.5,391.5 1215.6,366.3 1214.3,341.2"/>
<polyline points="1230.9,487.4 1233.0,460.8 1234.5,434.4 1235.0,408.5 1234.5,383.1 1233.0,358.1 1230.9,333.4"/>
<polyline points="1247.4,479.7 1250.3,452.7 1252.5,426.0 1253.2,400.0 1252.5,374.7 1250.3,350.0 1247.4,325.7"/>
<polyline points="1115.0,522.2 1133.6,510.9 1152.2,500.0 1170.9,489.8 1189.5,480.6 1208.1,472.4 1226.8,465.2 1245.4,458.8 1264.0,452.8"/>
<polyline points="1115.0,503.0 1133.6,492.5 1152.2,482.4 1170.9,472.7 1189.5,463.6 1208.1,455.3 1226.8,447.6 1245.4,440.4 1264.0,433.5"/>
<polyline points="1115.0,483.8 1133.6,474.2 1152.2,464.7 1170.9,455.6 1189.5,446.7 1208.1,438.2 1226.8,430.0 1245.4,422.1 1264.0,414.2"/>
<polyline points="1115.0,464.5 1133.6,455.8 1152.2,447.1 1170.9,438.4 1189.5,429.8 1208.1,421.1 1226.8,412.4 1245.4,403.7 1264.0,395.0"/>
<polyline points="1115.0,445.2 1133.6,437.4 1152.2,429.5 1170.9,421.3 1189.5,412.8 1208.1,403.9 1226.8,394.8 1245.4,385.3 1264.0,375.8"/>
<polyline points="1115.0,426.0 1133.6,419.1 1152.2,411.9 1170.9,404.2 1189.5,395.9 1208.1,386.8 1226.8,377.1 1245.4,367.0 1264.0,356.5"/>
<polyline points="1115.0,406.8 1133.6,400.7 1152.2,394.3 1170.9,387.1 1189.5,378.9 1208.1,369.7 1226.8,359.5 1245.4,348.6 1264.0,337.2"/>
<polyline points="1115.0,541.5 1264.0,318.0"/>
<polyline points="1115.0,387.5 1264.0,472.0"/>
<polyline points="211.7,664.1 209.3,634.6 207.5,605.3 206.8,576.2 207.5,547.3 209.3,518.6 211.7,490.1"/>
<polyline points="233.5,668.2 231.6,638.8 230.2,609.6 229.7,580.5 230.2,551.6 231.6,522.8 233.5,494.2"/>
<polyline points="255.2,672.3 253.8,643.0 252.8,613.8 252.5,584.8 252.8,555.8 253.8,527.0 255.2,498.3"/>
<polyline points="276.9,676.4 276.1,647.2 275.5,618.1 275.3,589.1 275.5,560.1 276.1,531.2 276.9,502.4"/>
<polyline points="298.6,680.5 298.4,651.4 298.2,622.4 298.1,593.4 298.2,564.4 298.4,535.4 298.6,506.5"/>
<polyline points="320.4,684.5 320.6,655.6 320.8,626.6 320.9,597.6 320.8,568.6 320.6,539.6 320.4,510.5"/>
<polyline points="342.1,688.6 342.9,659.8 343.5,630.9 343.7,601.9 343.5,572.9 342.9,543.8 342.1,514.6"/>
<polyline points="363.8,692.7 365.2,664.0 366.2,635.2 366.5,606.2 366.2,577.2 365.2,548.0 363.8,518.7"/>
<polyline points="385.5,696.8 387.4,668.2 388.8,639.4 389.3,610.5 388.8,581.4 387.4,552.2 385.5,522.8"/>
<polyline points="407.3,700.9 409.7,672.4 411.5,643.7 412.2,614.8 411.5,585.7 409.7,556.4 407.3,526.9"/>
<polyline points="190.0,635.1 219.9,638.1 249.8,641.4 279.6,645.6 309.5,650.6 339.4,656.8 369.2,663.9 399.1,671.8 429.0,680.1"/>
<polyline points="190.0,610.3 219.9,613.2 249.8,616.6 279.6,620.7 309.5,625.8 339.4,631.9 369.2,639.1 399.1,647.0 429.0,655.3"/>
<polyline points="190.0,585.4 219.9,588.4 249.8,591.7 279.6,595.8 309.5,600.9 339.4,607.1 369.2,614.2 399.1,622.1 429.0,630.4"/>
<polyline points="190.0,560.6 219.9,563.5 249.8,566.9 279.6,571.0 309.5,576.1 339.4,582.2 369.2,589.4 399.1,597.3 429.0,605.6"/>
<polyline points="190.0,535.7 219.9,538.7 249.8,542.0 279.6,546.1 309.5,551.2 339.4,557.4 369.2,564.5 399.1,572.4 429.0,580.7"/>
<polyline points="190.0,510.9 219.9,513.8 249.8,517.2 279.6,521.3 309.5,526.4 339.4,532.5 369.2,539.7 399.1,547.6 429.0,555.9"/>
<polyline points="211.7,490.1 211.7,482.1"/>
<polyline points="233.5,494.2 233.5,478.2"/>
<polyline points="255.2,498.3 255.2,474.3"/>
<polyline points="276.9,502.4 276.9,470.4"/>
<polyline points="298.6,506.5 298.6,466.5"/>
<polyline points="320.4,510.5 320.4,462.5"/>
<polyline points="342.1,514.6 342.1,458.6"/>
<polyline points="363.8,518.7 363.8,454.7"/>
<polyline points="385.5,522.8 385.5,450.8"/>
<polyline points="407.3,526.9 407.3,446.9"/>
<polyline points="452.9,709.5 450.5,680.0 448.8,650.7 448.1,621.6 448.8,592.7 450.5,564.0 452.9,535.5"/>
<polyline points="476.8,714.0 475.0,684.7 473.7,655.4 473.2,626.3 473.7,597.4 475.0,568.7 476.8,540.0"/>
<polyline points="500.7,718.5 499.5,689.3 498.6,660.1 498.3,631.0 498.6,602.1 499.5,573.3 500.7,544.5"/>
<polyline points="524.6,723.0 524.0,693.9 523.6,664.8 523.4,635.8 523.6,606.8 524.0,577.9 524.6,549.0"/>
<polyline points="548.5,727.5 548.5,698.5 548.5,669.5 548.5,640.5 548.5,611.5 548.5,582.5 548.5,553.5"/>
<polyline points="572.4,732.0 573.0,703.1 573.4,674.2 573.6,645.2 573.4,616.2 573.0,587.1 572.4,558.0"/>
<polyline points="596.3,736.5 597.5,707.7 598.4,678.9 598.7,650.0 598.4,620.9 597.5,591.7 596.3,562.5"/>
<polyline points="620.2,741.0 622.0,712.3 623.3,683.6 623.8,654.7 623.3,625.6 622.0,596.3 620.2,567.0"/>
<polyline points="644.1,745.5 646.5,717.0 648.2,688.3 648.9,659.4 648.2,630.3 646.5,601.0 644.1,571.5"/>
<polyline points="429.0,680.1 458.9,683.1 488.8,686.4 518.6,690.6 548.5,695.6 578.4,701.8 608.2,708.9 638.1,716.8 668.0,725.1"/>
<polyline points="429.0,655.3 458.9,658.2 488.8,661.6 518.6,665.7 548.5,670.8 578.4,676.9 608.2,684.1 638.1,692.0 668.0,700.3"/>
<polyline points="429.0,630.4 458.9,633.4 488.8,636.7 518.6,640.8 548.5,645.9 578.4,652.1 608.2,659.2 638.1,667.1 668.0,675.4"/>
<polyline points="429.0,605.6 458.9,608.5 488.8,611.9 518.6,616.0 548.5,621.1 578.4,627.2 608.2,634.4 638.1,642.3 668.0,650.6"/>
<polyline points="429.0,580.7 458.9,583.7 488.8,587.0 518.6,591.1 548.5,596.2 578.4,602.4 608.2,609.5 638.1,617.4 668.0,625.7"/>
<polyline points="429.0,555.9 458.9,558.8 488.8,562.2 518.6,566.3 548.5,571.4 578.4,577.5 608.2,584.7 638.1,592.6 668.0,600.9"/>
<polyline points="452.9,535.5 452.9,456.3"/>
<polyline points="476.8,540.0 476.8,469.6"/>
<polyline points="500.7,544.5 500.7,482.9"/>
<polyline points="524.6,549.0 524.6,496.2"/>
<polyline points="548.5,553.5 548.5,509.5"/>
<polyline points="572.4,558.0 572.4,522.8"/>
<polyline points="596.3,562.5 596.3,536.1"/>
<polyline points="620.2,567.0 620.2,549.4"/>
<polyline points="644.1,571.5 644.1,562.7"/>
<polyline points="807.7,386.1 805.3,356.6 803.5,327.3 802.8,298.2 803.5,269.3 805.3,240.6 807.7,212.1"/>
<polyline points="829.5,390.2 827.6,360.8 826.2,331.6 825.7,302.5 826.2,273.6 827.6,244.8 829.5,216.2"/>
<polyline points="851.2,394.3 849.8,365.0 848.8,335.8 848.5,306.8 848.8,277.8 849.8,249.0 851.2,220.3"/>
<polyline points="872.9,398.4 872.1,369.2 871.5,340.1 871.3,311.1 871.5,282.1 872.1,253.2 872.9,224.4"/>
<polyline points="894.6,402.5 894.4,373.4 894.2,344.4 894.1,315.4 894.2,286.4 894.4,257.4 894.6,228.5"/>
<polyline points="916.4,406.5 916.6,377.6 916.8,348.6 916.9,319.6 916.8,290.6 916.6,261.6 916.4,232.5"/>
<polyline points="938.1,410.6 938.9,381.8 939.5,352.9 939.7,323.9 939.5,294.9 938.9,265.8 938.1,236.6"/>
<polyline points="959.8,414.7 961.2,386.0 962.2,357.2 962.5,328.2 962.2,299.2 961.2,270.0 959.8,240.7"/>
<polyline points="981.5,418.8 983.4,390.2 984.8,361.4 985.3,332.5 984.8,303.4 983.4,274.2 981.5,244.8"/>
<polyline points="1003.3,422.9 1005.7,394.4 1007.5,365.7 1008.2,336.8 1007.5,307.7 1005.7,278.4 1003.3,248.9"/>
<polyline points="786.0,357.1 815.9,360.1 845.8,363.4 875.6,367.6 905.5,372.6 935.4,378.8 965.2,385.9 995.1,393.8 1025.0,402.1"/>
<polyline points="786.0,332.3 815.9,335.2 845.8,338.6 875.6,342.7 905.5,347.8 935.4,353.9 965.2,361.1 995.1,369.0 1025.0,377.3"/>
<polyline points="786.0,307.4 815.9,310.4 845.8,313.7 875.6,317.8 905.5,322.9 935.4,329.1 965.2,336.2 995.1,344.1 1025.0,352.4"/>
<polyline points="786.0,282.6 815.9,285.5 845.8,288.9 875.6,293.0 905.5,298.1 935.4,304.2 965.2,311.4 995.1,319.3 1025.0,327.6"/>
<polyline points="786.0,257.7 815.9,260.7 845.8,264.0 875.6,268.1 905.5,273.2 935.4,279.4 965.2,286.5 995.1,294.4 1025.0,302.7"/>
<polyline points="786.0,232.9 815.9,235.8 845.8,239.2 875.6,243.3 905.5,248.4 935.4,254.5 965.2,261.7 995.1,269.6 1025.0,277.9"/>
<polyline points="807.7,212.1 807.7,204.1"/>
<polyline points="829.5,216.2 829.5,200.2"/>
<polyline points="851.2,220.3 851.2,196.3"/>
<polyline points="872.9,224.4 872.9,192.4"/>
<polyline points="894.6,228.5 894.6,188.5"/>
<polyline points="916.4,232.5 916.4,184.5"/>
<polyline points="938.1,236.6 938.1,180.6"/>
<polyline points="959.8,240.7 959.8,176.7"/>
<polyline points="981.5,244.8 981.5,172.8"/>
<polyline points="1003.3,248.9 1003.3,168.9"/>
<polyline points="1048.9,431.5 1046.5,402.0 1044.8,372.7 1044.1,343.6 1044.8,314.7 1046.5,286.0 1048.9,257.5"/>
<polyline points="1072.8,436.0 1071.0,406.7 1069.7,377.4 1069.2,348.3 1069.7,319.4 1071.0,290.7 1072.8,262.0"/>
<polyline points="1096.7,440.5 1095.5,411.3 1094.6,382.1 1094.3,353.0 1094.6,324.1 1095.5,295.3 1096.7,266.5"/>
<polyline points="1120.6,445.0 1120.0,415.9 1119.6,386.8 1119.4,357.8 1119.6,328.8 1120.0,299.9 1120.6,271.0"/>
<polyline points="1144.5,449.5 1144.5,420.5 1144.5,391.5 1144.5,362.5 1144.5,333.5 1144.5,304.5 1144.5,275.5"/>
<polyline points="1168.4,454.0 1169.0,425.1 1169.4,396.2 1169.6,367.2 1169.4,338.2 1169.0,309.1 1168.4,280.0"/>
<polyline points="1192.3,458.5 1193.5,429.7 1194.4,400.9 1194.7,372.0 1194.4,342.9 1193.5,313.7 1192.3,284.5"/>
<polyline points="1216.2,463.0 1218.0,434.3 1219.3,405.6 1219.8,376.7 1219.3,347.6 1218.0,318.3 1216.2,289.0"/>
<polyline points="1240.1,467.5 1242.5,439.0 1244.2,410.3 1244.9,381.4 1244.2,352.3 1242.5,323.0 1240.1,293.5"/>
<polyline points="1025.0,402.1 1054.9,405.1 1084.8,408.4 1114.6,412.6 1144.5,417.6 1174.4,423.8 1204.2,430.9 1234.1,438.8 1264.0,447.1"/>
<polyline points="1025.0,377.3 1054.9,380.2 1084.8,383.6 1114.6,387.7 1144.5,392.8 1174.4,398.9 1204.2,406.1 1234.1,414.0 1264.0,422.3"/>
<polyline points="1025.0,352.4 1054.9,355.4 1084.8,358.7 1114.6,362.8 1144.5,367.9 1174.4,374.1 1204.2,381.2 1234.1,389.1 1264.0,397.4"/>
<polyline points="1025.0,327.6 1054.9,330.5 1084.8,333.9 1114.6,338.0 1144.5,343.1 1174.4,349.2 1204.2,356.4 1234.1,364.3 1264.0,372.6"/>
<polyline points="1025.0,302.7 1054.9,305.7 1084.8,309.0 1114.6,313.1 1144.5,318.2 1174.4,324.4 1204.2,331.5 1234.1,339.4 1264.0,347.7"/>
<polyline points="1025.0,277.9 1054.9,280.8 1084.8,284.2 1114.6,288.3 1144.5,293.4 1174.4,299.5 1204.2,306.7 1234.1,314.6 1264.0,322.9"/>
<polyline points="1048.9,257.5 1048.9,178.3"/>
<polyline points="1072.8,262.0 1072.8,191.6"/>
<polyline points="1096.7,266.5 1096.7,204.9"/>
<polyline points="1120.6,271.0 1120.6,218.2"/>
<polyline points="1144.5,275.5 1144.5,231.5"/>
<polyline points="1168.4,280.0 1168.4,244.8"/>
<polyline points="1192.3,284.5 1192.3,258.1"/>
<polyline points="1216.2,289.0 1216.2,271.4"/>
<polyline points="1240.1,293.5 1240.1,284.7"/>
<polyline points="202.4,480.2 441.4,437.2"/>
<polyline points="214.8,474.4 453.8,431.4"/>
<polyline points="227.2,468.6 466.2,425.6"/>
<polyline points="239.7,462.8 478.7,419.8"/>
<polyline points="252.1,457.0 491.1,414.0"/>
<polyline points="264.5,451.2 503.5,408.2"/>
<polyline points="276.9,445.5 515.9,402.5"/>
<polyline points="289.3,439.7 528.3,396.7"/>
<polyline points="301.8,433.9 540.8,390.9"/>
<polyline points="314.2,428.1 553.2,385.1"/>
<polyline points="326.6,422.3 565.6,379.3"/>
<polyline points="219.9,480.6 368.9,411.1"/>
<polyline points="249.8,475.2 398.8,405.8"/>
<polyline points="279.6,469.9 428.6,400.4"/>
<polyline points="309.5,464.5 458.5,395.0"/>
<polyline points="339.4,459.1 488.4,389.6"/>
<polyline points="369.2,453.8 518.2,384.2"/>
<polyline points="399.1,448.4 548.1,378.9"/>
<polyline points="190.0,486.0 578.0,373.5"/>
<polyline points="339.0,416.5 429.0,443.0"/>
<polyline points="351.4,410.7 590.4,367.7"/>
<polyline points="363.8,404.9 602.8,361.9"/>
<polyline points="376.2,399.1 615.2,356.1"/>
<polyline points="388.7,393.3 627.7,350.3"/>
<polyline points="401.1,387.5 640.1,344.5"/>
<polyline points="413.5,381.8 652.5,338.8"/>
<polyline points="425.9,376.0 664.9,333.0"/>
<polyline points="438.3,370.2 677.3,327.2"/>
<polyline points="450.8,364.4 689.8,321.4"/>
<polyline points="463.2,358.6 702.2,315.6"/>
<polyline points="475.6,352.8 714.6,309.8"/>
<polyline points="368.9,411.1 517.9,341.6"/>
<polyline points="398.8,405.8 547.8,336.2"/>
<polyline points="428.6,400.4 577.6,330.9"/>
<polyline points="458.5,395.0 607.5,325.5"/>
<polyline points="488.4,389.6 637.4,320.1"/>
<polyline points="518.2,384.2 667.2,314.8"/>
<polyline points="548.1,378.9 697.1,309.4"/>
<polyline points="339.0,416.5 727.0,304.0"/>
<polyline points="488.0,347.0 578.0,373.5"/>
<polyline points="500.4,341.2 739.4,298.2"/>
<polyline points="512.8,335.4 751.8,292.4"/>
<polyline points="525.2,329.6 764.2,286.6"/>
<polyline points="537.7,323.8 776.7,280.8"/>
<polyline points="550.1,318.0 789.1,275.0"/>
<polyline points="562.5,312.2 801.5,269.2"/>
<polyline points="574.9,306.5 813.9,263.5"/>
<polyline points="587.3,300.7 826.3,257.7"/>
<polyline points="599.8,294.9 838.8,251.9"/>
<polyline points="612.2,289.1 851.2,246.1"/>
<polyline points="624.6,283.3 863.6,240.3"/>
<polyline points="517.9,341.6 666.9,272.1"/>
<polyline points="547.8,336.2 696.8,266.8"/>
<polyline points="577.6,330.9 726.6,261.4"/>
<polyline points="607.5,325.5 756.5,256.0"/>
<polyline points="637.4,320.1 786.4,250.6"/>
<polyline points="667.2,314.8 816.2,245.2"/>
<polyline points="697.1,309.4 846.1,239.9"/>
<polyline points="488.0,347.0 876.0,234.5"/>
<polyline points="637.0,277.5 727.0,304.0"/>
<polyline points="649.4,271.7 888.4,228.7"/>
<polyline points="661.8,265.9 900.8,222.9"/>
<polyline points="674.2,260.1 913.2,217.1"/>
<polyline points="686.7,254.3 925.7,211.3"/>
<polyline points="699.1,248.5 938.1,205.5"/>
<polyline points="711.5,242.8 950.5,199.8"/>
<polyline points="723.9,237.0 962.9,194.0"/>
<polyline points="736.3,231.2 975.3,188.2"/>
<polyline points="748.8,225.4 987.8,182.4"/>
<polyline points="761.2,219.6 1000.2,176.6"/>
<polyline points="773.6,213.8 1012.6,170.8"/>
<polyline points="666.9,272.1 815.9,202.6"/>
<polyline points="696.8,266.8 845.8,197.2"/>
<polyline points="726.6,261.4 875.6,191.9"/>
<polyline points="756.5,256.0 905.5,186.5"/>
<polyline points="786.4,250.6 935.4,181.1"/>
<polyline points="816.2,245.2 965.2,175.8"/>
<polyline points="846.1,239.9 995.1,170.4"/>
<polyline points="637.0,277.5 1025.0,165.0"/>
<polyline points="786.0,208.0 876.0,234.5"/>
<polyline points="443.9,436.0 473.8,450.5 503.6,465.4 533.5,480.8 563.4,497.0 593.3,514.0 623.1,531.9 653.0,550.3 682.9,569.0"/>
<polyline points="458.8,429.1 488.7,441.7 518.5,454.9 548.4,469.2 578.3,485.0 608.2,502.5 638.0,521.4 667.9,541.4 697.8,562.1"/>
<polyline points="473.7,422.1 503.6,433.2 533.5,445.1 563.3,458.6 593.2,474.1 623.1,491.8 653.0,511.6 682.8,533.0 712.7,555.1"/>
<polyline points="488.6,415.2 518.5,425.3 548.4,436.3 578.2,449.3 608.1,464.6 638.0,482.5 667.9,502.8 697.7,525.0 727.6,548.2"/>
<polyline points="503.5,408.2 533.4,418.0 563.2,428.8 593.1,441.5 623.0,456.8 652.9,474.7 682.8,495.3 712.6,517.7 742.5,541.2"/>
<polyline points="518.4,401.3 548.3,411.4 578.1,422.4 608.0,435.4 637.9,450.7 667.8,468.6 697.6,488.9 727.5,511.1 757.4,534.3"/>
<polyline points="533.3,394.4 563.2,405.4 593.0,417.3 622.9,430.8 652.8,446.3 682.7,464.0 712.5,483.8 742.4,505.2 772.3,527.4"/>
<polyline points="548.2,387.4 578.1,400.0 608.0,413.2 637.8,427.5 667.7,443.3 697.6,460.8 727.5,479.7 757.3,499.7 787.2,520.4"/>
<polyline points="563.1,380.5 593.0,394.9 622.9,409.8 652.7,425.2 682.6,441.4 712.5,458.4 742.4,476.3 772.2,494.7 802.1,513.5"/>
<polyline points="455.6,457.8 474.2,446.7 492.8,436.0 511.4,426.0 530.1,416.9 548.7,408.7 567.3,401.3 585.9,394.6 604.6,388.3"/>
<polyline points="482.1,472.6 500.7,459.4 519.4,447.0 538.0,435.8 556.6,426.2 575.2,418.4 593.9,412.2 612.5,407.3 631.1,403.1"/>
<polyline points="508.7,487.3 527.3,472.7 545.9,458.9 564.5,446.9 583.2,437.0 601.8,429.5 620.4,424.2 639.0,420.6 657.7,417.8"/>
<polyline points="535.2,502.1 553.8,486.6 572.5,472.2 591.1,459.7 609.7,449.6 628.3,442.3 647.0,437.5 665.6,434.5 684.2,432.6"/>
<polyline points="561.8,516.9 580.4,501.4 599.0,487.0 617.7,474.4 636.3,464.4 654.9,457.1 673.5,452.2 692.2,449.3 710.8,447.4"/>
<polyline points="588.3,531.7 607.0,517.0 625.6,503.3 644.2,491.2 662.8,481.3 681.5,473.8 700.1,468.5 718.7,464.9 737.3,462.2"/>
<polyline points="614.9,546.4 633.5,533.3 652.1,520.9 670.8,509.7 689.4,500.1 708.0,492.3 726.6,486.1 745.3,481.2 763.9,476.9"/>
<polyline points="641.4,561.2 660.1,550.2 678.7,539.5 697.3,529.5 715.9,520.3 734.6,512.1 753.2,504.7 771.8,498.1 790.4,491.7"/>
<polyline points="429.0,443.0 477.5,448.3 526.0,449.9 574.5,451.4 623.0,456.8 671.5,467.3 720.0,481.6 768.5,495.9 817.0,506.5"/>
<polyline points="578.0,373.5 589.2,396.2 600.5,415.1 611.8,434.1 623.0,456.8 634.2,484.7 645.5,516.4 656.8,548.1 668.0,576.0"/>
<polyline points="592.9,366.5 622.8,381.0 652.6,395.9 682.5,411.3 712.4,427.5 742.3,444.5 772.1,462.4 802.0,480.8 831.9,499.5"/>
<polyline points="607.8,359.6 637.7,372.2 667.5,385.4 697.4,399.7 727.3,415.5 757.2,433.0 787.0,451.9 816.9,471.9 846.8,492.6"/>
<polyline points="622.7,352.6 652.6,363.7 682.5,375.6 712.3,389.1 742.2,404.6 772.1,422.3 802.0,442.1 831.8,463.5 861.7,485.6"/>
<polyline points="637.6,345.7 667.5,355.8 697.4,366.8 727.2,379.8 757.1,395.1 787.0,413.0 816.9,433.3 846.7,455.5 876.6,478.7"/>
<polyline points="652.5,338.8 682.4,348.5 712.2,359.3 742.1,372.0 772.0,387.2 801.9,405.2 831.8,425.8 861.6,448.2 891.5,471.8"/>
<polyline points="667.4,331.8 697.3,341.9 727.1,352.9 757.0,365.9 786.9,381.2 816.8,399.1 846.6,419.4 876.5,441.6 906.4,464.8"/>
<polyline points="682.3,324.9 712.2,335.9 742.0,347.8 771.9,361.3 801.8,376.8 831.7,394.5 861.5,414.3 891.4,435.7 921.3,457.9"/>
<polyline points="697.2,317.9 727.1,330.5 757.0,343.7 786.8,358.0 816.7,373.8 846.6,391.3 876.5,410.2 906.3,430.2 936.2,450.9"/>
<polyline points="712.1,311.0 742.0,325.4 771.8,340.3 801.7,355.7 831.6,371.9 861.5,388.9 891.3,406.8 921.2,425.2 951.1,444.0"/>
<polyline points="604.6,388.3 623.2,377.2 641.8,366.5 660.4,356.5 679.1,347.4 697.7,339.2 716.3,331.8 734.9,325.1 753.6,318.8"/>
<polyline points="631.1,403.1 649.7,389.9 668.4,377.5 687.0,366.3 705.6,356.7 724.2,348.9 742.9,342.7 761.5,337.8 780.1,333.6"/>
<polyline points="657.7,417.8 676.3,403.2 694.9,389.4 713.5,377.4 732.2,367.5 750.8,360.0 769.4,354.7 788.0,351.1 806.7,348.3"/>
<polyline points="684.2,432.6 702.8,417.1 721.5,402.7 740.1,390.2 758.7,380.1 777.3,372.8 796.0,368.0 814.6,365.0 833.2,363.1"/>
<polyline points="710.8,447.4 729.4,431.9 748.0,417.5 766.7,404.9 785.3,394.9 803.9,387.6 822.5,382.7 841.2,379.8 859.8,377.9"/>
<polyline points="737.3,462.2 756.0,447.5 774.6,433.8 793.2,421.7 811.8,411.8 830.5,404.3 849.1,399.0 867.7,395.4 886.3,392.7"/>
<polyline points="763.9,476.9 782.5,463.8 801.1,451.4 819.8,440.2 838.4,430.6 857.0,422.8 875.6,416.6 894.3,411.7 912.9,407.4"/>
<polyline points="790.4,491.7 809.1,480.7 827.7,470.0 846.3,460.0 864.9,450.8 883.6,442.6 902.2,435.2 920.8,428.6 939.4,422.2"/>
<polyline points="578.0,373.5 626.5,378.8 675.0,380.4 723.5,381.9 772.0,387.2 820.5,397.8 869.0,412.1 917.5,426.4 966.0,437.0"/>
<polyline points="727.0,304.0 738.2,326.7 749.5,345.6 760.8,364.6 772.0,387.2 783.2,415.2 794.5,446.9 805.8,478.6 817.0,506.5"/>
<polyline points="741.9,297.0 771.8,311.5 801.7,326.4 831.5,341.8 861.4,358.0 891.3,375.0 921.2,392.9 951.0,411.3 980.9,430.0"/>
<polyline points="756.8,290.1 786.7,302.7 816.5,315.9 846.4,330.2 876.3,346.0 906.2,363.5 936.0,382.4 965.9,402.4 995.8,423.1"/>
<polyline points="771.7,283.1 801.6,294.2 831.5,306.1 861.3,319.6 891.2,335.1 921.1,352.8 951.0,372.6 980.8,394.0 1010.7,416.1"/>
<polyline points="786.6,276.2 816.5,286.3 846.3,297.3 876.2,310.3 906.1,325.6 936.0,343.5 965.8,363.8 995.7,386.0 1025.6,409.2"/>
<polyline points="801.5,269.2 831.4,279.0 861.2,289.8 891.1,302.5 921.0,317.8 950.9,335.7 980.8,356.3 1010.6,378.7 1040.5,402.2"/>
<polyline points="816.4,262.3 846.3,272.4 876.2,283.4 906.0,296.4 935.9,311.7 965.8,329.6 995.7,349.9 1025.5,372.1 1055.4,395.3"/>
<polyline points="831.3,255.4 861.2,266.4 891.0,278.3 920.9,291.8 950.8,307.3 980.7,325.0 1010.5,344.8 1040.4,366.2 1070.3,388.4"/>
<polyline points="846.2,248.4 876.1,261.0 906.0,274.2 935.8,288.5 965.7,304.3 995.6,321.8 1025.5,340.7 1055.3,360.7 1085.2,381.4"/>
<polyline points="861.1,241.5 891.0,255.9 920.8,270.8 950.7,286.2 980.6,302.4 1010.5,319.4 1040.3,337.3 1070.2,355.7 1100.1,374.5"/>
<polyline points="753.6,318.8 772.2,307.7 790.8,297.0 809.4,287.0 828.1,277.9 846.7,269.7 865.3,262.3 883.9,255.6 902.6,249.3"/>
<polyline points="780.1,333.6 798.7,320.4 817.4,308.0 836.0,296.8 854.6,287.2 873.2,279.4 891.9,273.2 910.5,268.3 929.1,264.1"/>
<polyline points="806.7,348.3 825.3,333.7 843.9,319.9 862.5,307.9 881.2,298.0 899.8,290.5 918.4,285.2 937.0,281.6 955.7,278.8"/>
<polyline points="833.2,363.1 851.8,347.6 870.5,333.2 889.1,320.7 907.7,310.6 926.3,303.3 945.0,298.5 963.6,295.5 982.2,293.6"/>
<polyline points="859.8,377.9 878.4,362.4 897.0,348.0 915.7,335.4 934.3,325.4 952.9,318.1 971.5,313.2 990.2,310.3 1008.8,308.4"/>
<polyline points="886.3,392.7 905.0,378.0 923.6,364.3 942.2,352.2 960.8,342.3 979.5,334.8 998.1,329.5 1016.7,325.9 1035.3,323.2"/>
<polyline points="912.9,407.4 931.5,394.3 950.1,381.9 968.8,370.7 987.4,361.1 1006.0,353.3 1024.6,347.1 1043.3,342.2 1061.9,337.9"/>
<polyline points="939.4,422.2 958.1,411.2 976.7,400.5 995.3,390.5 1013.9,381.3 1032.6,373.1 1051.2,365.7 1069.8,359.1 1088.4,352.7"/>
<polyline points="727.0,304.0 775.5,309.3 824.0,310.9 872.5,312.4 921.0,317.8 969.5,328.3 1018.0,342.6 1066.5,356.9 1115.0,367.5"/>
<polyline points="876.0,234.5 887.2,257.2 898.5,276.1 909.8,295.1 921.0,317.8 932.2,345.7 943.5,377.4 954.8,409.1 966.0,437.0"/>
<polyline points="890.9,227.5 920.8,242.0 950.7,256.9 980.5,272.3 1010.4,288.5 1040.3,305.5 1070.2,323.4 1100.0,341.8 1129.9,360.5"/>
<polyline points="905.8,220.6 935.7,233.2 965.5,246.4 995.4,260.7 1025.3,276.5 1055.2,294.0 1085.0,312.9 1114.9,332.9 1144.8,353.6"/>
<polyline points="920.7,213.6 950.6,224.7 980.5,236.6 1010.3,250.1 1040.2,265.6 1070.1,283.3 1100.0,303.1 1129.8,324.5 1159.7,346.6"/>
<polyline points="935.6,206.7 965.5,216.8 995.3,227.8 1025.2,240.8 1055.1,256.1 1085.0,274.0 1114.8,294.3 1144.7,316.5 1174.6,339.7"/>
<polyline points="950.5,199.8 980.4,209.5 1010.2,220.3 1040.1,233.0 1070.0,248.2 1099.9,266.2 1129.8,286.8 1159.6,309.2 1189.5,332.8"/>
<polyline points="965.4,192.8 995.3,202.9 1025.2,213.9 1055.0,226.9 1084.9,242.2 1114.8,260.1 1144.7,280.4 1174.5,302.6 1204.4,325.8"/>
<polyline points="980.3,185.8 1010.2,196.9 1040.1,208.8 1069.9,222.3 1099.8,237.8 1129.7,255.5 1159.6,275.3 1189.4,296.7 1219.3,318.8"/>
<polyline points="995.2,178.9 1025.1,191.5 1054.9,204.7 1084.8,219.0 1114.7,234.8 1144.6,252.3 1174.4,271.2 1204.3,291.2 1234.2,311.9"/>
<polyline points="1010.1,171.9 1040.0,186.4 1069.8,201.3 1099.7,216.7 1129.6,232.9 1159.5,249.9 1189.3,267.8 1219.2,286.2 1249.1,304.9"/>
<polyline points="902.6,249.3 921.2,238.2 939.8,227.5 958.4,217.5 977.1,208.4 995.7,200.2 1014.3,192.8 1032.9,186.1 1051.6,179.8"/>
<polyline points="929.1,264.1 947.7,250.9 966.4,238.5 985.0,227.3 1003.6,217.7 1022.2,209.9 1040.9,203.7 1059.5,198.8 1078.1,194.6"/>
<polyline points="955.7,278.8 974.3,264.2 992.9,250.4 1011.5,238.4 1030.2,228.5 1048.8,221.0 1067.4,215.7 1086.0,212.1 1104.7,209.3"/>
<polyline points="982.2,293.6 1000.8,278.1 1019.5,263.7 1038.1,251.2 1056.7,241.1 1075.3,233.8 1094.0,229.0 1112.6,226.0 1131.2,224.1"/>
<polyline points="1008.8,308.4 1027.4,292.9 1046.0,278.5 1064.7,265.9 1083.3,255.9 1101.9,248.6 1120.5,243.7 1139.2,240.8 1157.8,238.9"/>
<polyline points="1035.3,323.2 1054.0,308.5 1072.6,294.8 1091.2,282.7 1109.8,272.8 1128.5,265.3 1147.1,260.0 1165.7,256.4 1184.3,253.7"/>
<polyline points="1061.9,337.9 1080.5,324.8 1099.1,312.4 1117.8,301.2 1136.4,291.6 1155.0,283.8 1173.6,277.6 1192.3,272.7 1210.9,268.4"/>
<polyline points="1088.4,352.7 1107.1,341.7 1125.7,331.0 1144.3,321.0 1162.9,311.8 1181.6,303.6 1200.2,296.2 1218.8,289.6 1237.4,283.2"/>
<polyline points="876.0,234.5 924.5,239.8 973.0,241.4 1021.5,242.9 1070.0,248.2 1118.5,258.8 1167.0,273.1 1215.5,287.4 1264.0,298.0"/>
<polyline points="1025.0,165.0 1036.2,187.7 1047.5,206.6 1058.8,225.6 1070.0,248.2 1081.2,276.2 1092.5,307.9 1103.8,339.6 1115.0,367.5"/>
</g>
<g stroke-linecap="round">
<line x1="190.0" y1="660.0" x2="190.0" y2="486.0" stroke="#a00000" stroke-width="7.2"/>
<line x1="339.0" y1="590.5" x2="339.0" y2="416.5" stroke="#a00000" stroke-width="7.2"/>
<line x1="488.0" y1="521.0" x2="488.0" y2="347.0" stroke="#a00000" stroke-width="7.2"/>
<line x1="637.0" y1="451.5" x2="637.0" y2="277.5" stroke="#a00000" stroke-width="7.2"/>
<line x1="786.0" y1="382.0" x2="786.0" y2="208.0" stroke="#a00000" stroke-width="7.2"/>
<line x1="668.0" y1="750.0" x2="668.0" y2="576.0" stroke="#a00000" stroke-width="7.2"/>
<line x1="817.0" y1="680.5" x2="817.0" y2="506.5" stroke="#a00000" stroke-width="7.2"/>
<line x1="966.0" y1="611.0" x2="966.0" y2="437.0" stroke="#a00000" stroke-width="7.2"/>
<line x1="1115.0" y1="541.5" x2="1115.0" y2="367.5" stroke="#a00000" stroke-width="7.2"/>
<line x1="1264.0" y1="472.0" x2="1264.0" y2="298.0" stroke="#a00000" stroke-width="7.2"/>
<line x1="429.0" y1="705.0" x2="429.0" y2="443.0" stroke="#a00000" stroke-width="7.2"/>
<line x1="1025.0" y1="427.0" x2="1025.0" y2="165.0" stroke="#a00000" stroke-width="7.2"/>
<line x1="190.0" y1="660.0" x2="786.0" y2="382.0" stroke="#8c0000" stroke-width="7.2"/>
<line x1="668.0" y1="750.0" x2="1264.0" y2="472.0" stroke="#8c0000" stroke-width="7.2"/>
<line x1="190.0" y1="660.0" x2="668.0" y2="750.0" stroke="#9a0000" stroke-width="7.2"/>
<line x1="786.0" y1="382.0" x2="1264.0" y2="472.0" stroke="#9a0000" stroke-width="7.2"/>
<line x1="190.0" y1="486.0" x2="786.0" y2="208.0" stroke="#8c0000" stroke-width="7.2"/>
<line x1="668.0" y1="576.0" x2="1264.0" y2="298.0" stroke="#8c0000" stroke-width="7.2"/>
<line x1="190.0" y1="486.0" x2="668.0" y2="576.0" stroke="#9a0000" stroke-width="7.2"/>
<line x1="786.0" y1="208.0" x2="1264.0" y2="298.0" stroke="#9a0000" stroke-width="7.2"/>
<line x1="668.0" y1="596.0" x2="1264.0" y2="318.0" stroke="#8c0000" stroke-width="7.2"/>
<line x1="190.0" y1="506.0" x2="786.0" y2="228.0" stroke="#8c0000" stroke-width="7.2"/>
<line x1="190.0" y1="486.0" x2="429.0" y2="443.0" stroke="#9a0000" stroke-width="7.2"/>
<line x1="429.0" y1="443.0" x2="668.0" y2="576.0" stroke="#9a0000" stroke-width="7.2"/>
<line x1="339.0" y1="416.5" x2="578.0" y2="373.5" stroke="#9a0000" stroke-width="7.2"/>
<line x1="578.0" y1="373.5" x2="817.0" y2="506.5" stroke="#9a0000" stroke-width="7.2"/>
<line x1="488.0" y1="347.0" x2="727.0" y2="304.0" stroke="#9a0000" stroke-width="7.2"/>
<line x1="727.0" y1="304.0" x2="966.0" y2="437.0" stroke="#9a0000" stroke-width="7.2"/>
<line x1="637.0" y1="277.5" x2="876.0" y2="234.5" stroke="#9a0000" stroke-width="7.2"/>
<line x1="876.0" y1="234.5" x2="1115.0" y2="367.5" stroke="#9a0000" stroke-width="7.2"/>
<line x1="786.0" y1="208.0" x2="1025.0" y2="165.0" stroke="#9a0000" stroke-width="7.2"/>
<line x1="1025.0" y1="165.0" x2="1264.0" y2="298.0" stroke="#9a0000" stroke-width="7.2"/>
<line x1="429.0" y1="443.0" x2="1025.0" y2="165.0" stroke="#8c0000" stroke-width="7.2"/>
<line x1="309.5" y1="466.5" x2="905.5" y2="188.5" stroke="#8c0000" stroke-width="7.2"/>
<line x1="548.5" y1="511.5" x2="1144.5" y2="233.5" stroke="#8c0000" stroke-width="7.2"/>
<line x1="876.0" y1="234.5" x2="1025.0" y2="253.0" stroke="#9a0000" stroke-width="7.2"/>
<line x1="190.0" y1="660.0" x2="190.0" y2="486.0" stroke="#e00808" stroke-width="4.2"/>
<line x1="339.0" y1="590.5" x2="339.0" y2="416.5" stroke="#e00808" stroke-width="4.2"/>
<line x1="488.0" y1="521.0" x2="488.0" y2="347.0" stroke="#e00808" stroke-width="4.2"/>
<line x1="637.0" y1="451.5" x2="637.0" y2="277.5" stroke="#e00808" stroke-width="4.2"/>
<line x1="786.0" y1="382.0" x2="786.0" y2="208.0" stroke="#e00808" stroke-width="4.2"/>
<line x1="668.0" y1="750.0" x2="668.0" y2="576.0" stroke="#e00808" stroke-width="4.2"/>
<line x1="817.0" y1="680.5" x2="817.0" y2="506.5" stroke="#e00808" stroke-width="4.2"/>
<line x1="966.0" y1="611.0" x2="966.0" y2="437.0" stroke="#e00808" stroke-width="4.2"/>
<line x1="1115.0" y1="541.5" x2="1115.0" y2="367.5" stroke="#e00808" stroke-width="4.2"/>
<line x1="1264.0" y1="472.0" x2="1264.0" y2="298.0" stroke="#e00808" stroke-width="4.2"/>
<line x1="429.0" y1="705.0" x2="429.0" y2="443.0" stroke="#e00808" stroke-width="4.2"/>
<line x1="1025.0" y1="427.0" x2="1025.0" y2="165.0" stroke="#e00808" stroke-width="4.2"/>
<line x1="190.0" y1="660.0" x2="786.0" y2="382.0" stroke="#c00000" stroke-width="4.2"/>
<line x1="668.0" y1="750.0" x2="1264.0" y2="472.0" stroke="#c00000" stroke-width="4.2"/>
<line x1="190.0" y1="660.0" x2="668.0" y2="750.0" stroke="#d80000" stroke-width="4.2"/>
<line x1="786.0" y1="382.0" x2="1264.0" y2="472.0" stroke="#d80000" stroke-width="4.2"/>
<line x1="190.0" y1="486.0" x2="786.0" y2="208.0" stroke="#c00000" stroke-width="4.2"/>
<line x1="668.0" y1="576.0" x2="1264.0" y2="298.0" stroke="#c00000" stroke-width="4.2"/>
<line x1="190.0" y1="486.0" x2="668.0" y2="576.0" stroke="#d80000" stroke-width="4.2"/>
<line x1="786.0" y1="208.0" x2="1264.0" y2="298.0" stroke="#d80000" stroke-width="4.2"/>
<line x1="668.0" y1="596.0" x2="1264.0" y2="318.0" stroke="#c00000" stroke-width="4.2"/>
<line x1="190.0" y1="506.0" x2="786.0" y2="228.0" stroke="#c00000" stroke-width="4.2"/>
<line x1="190.0" y1="486.0" x2="429.0" y2="443.0" stroke="#d80000" stroke-width="4.2"/>
<line x1="429.0" y1="443.0" x2="668.0" y2="576.0" stroke="#d80000" stroke-width="4.2"/>
<line x1="339.0" y1="416.5" x2="578.0" y2="373.5" stroke="#d80000" stroke-width="4.2"/>
<line x1="578.0" y1="373.5" x2="817.0" y2="506.5" stroke="#d80000" stroke-width="4.2"/>
<line x1="488.0" y1="347.0" x2="727.0" y2="304.0" stroke="#d80000" stroke-width="4.2"/>
<line x1="727.0" y1="304.0" x2="966.0" y2="437.0" stroke="#d80000" stroke-width="4.2"/>
<line x1="637.0" y1="277.5" x2="876.0" y2="234.5" stroke="#d80000" stroke-width="4.2"/>
<line x1="876.0" y1="234.5" x2="1115.0" y2="367.5" stroke="#d80000" stroke-width="4.2"/>
<line x1="786.0" y1="208.0" x2="1025.0" y2="165.0" stroke="#d80000" stroke-width="4.2"/>
<line x1="1025.0" y1="165.0" x2="1264.0" y2="298.0" stroke="#d80000" stroke-width="4.2"/>
<line x1="429.0" y1="443.0" x2="1025.0" y2="165.0" stroke="#c00000" stroke-width="4.2"/>
<line x1="309.5" y1="466.5" x2="905.5" y2="188.5" stroke="#c00000" stroke-width="4.2"/>
<line x1="548.5" y1="511.5" x2="1144.5" y2="233.5" stroke="#c00000" stroke-width="4.2"/>
<line x1="876.0" y1="234.5" x2="1025.0" y2="253.0" stroke="#d80000" stroke-width="4.2"/>
</g>
</svg>
<!-- PARAMETERS -->
<div class="a" style="left:1479px;top:146px;width:377px;height:614px;background:#f0f0f0;border-left:1px solid #a0a0a0;border-top:1px solid #a0a0a0;border-right:2px solid #a0a0a0;border-bottom:2px solid #a0a0a0"></div>
<div class="dockt" style="left:1480px;top:146px;width:375px;height:16px;background:#99b4d1"></div>
<div class="n" style="left:1483px;top:147px">Parameters</div>
<svg class="a" style="left:1810px;top:147px" width="46" height="14"><path d="M2 4 H10 L6 8 Z" fill="#000"/><path d="M21 2 H26 M22 2 V8 H25 V2 M20 8 H27 M23.5 8 V13" stroke="#000" stroke-width="1.2" fill="none"/><path d="M32 2.5 L40 10.5 M40 2.5 L32 10.5" stroke="#000" stroke-width="1.6"/></svg>
<!-- options / selected objects -->
<div class="a" style="left:1481px;top:164px;width:69px;height:21px;background:#f8f8f8;border:1px solid #a8a8a8;border-right-color:#fff;border-bottom-color:#fff"></div>
<svg class="a" style="left:1486px;top:166px" width="18" height="17"><path d="M2 2 L15 14 M14 2 L3 13" stroke="#333" stroke-width="2"/><path d="M1 13 L5 9 L8 12 L4 16 Z" fill="#5a80b0"/><path d="M11 1 L16 6" stroke="#333" stroke-width="2.2"/></svg>
<div class="n" style="left:1510px;top:168px">Options</div>
<div class="a" style="left:1555px;top:165px;width:1px;height:20px;background:#b8b8b8"></div>
<svg class="a" style="left:1570px;top:166px" width="12" height="16"><path d="M1.5 1.5 V13 L4.5 10.5 L7 15 L8.5 14 L6.3 9.5 L10 9.5 Z" fill="#fff" stroke="#222" stroke-width="0.9"/></svg>
<div class="n" style="left:1589px;top:168px">Selected Objects</div>
<div class="a" style="left:1680px;top:165px;width:1px;height:20px;background:#b8b8b8"></div>
<!-- tabs -->
<div class="a" style="left:1487px;top:194px;width:360px;height:36px;background:#f0f0f0"></div>
<div class="a" style="left:1487px;top:194px;width:80px;height:18px;border:1px solid #d9d9d9;background:#f0f0f0"></div>
<div class="a" style="left:1566px;top:194px;width:89px;height:18px;border:1px solid #d9d9d9;background:#f0f0f0"></div>
<div class="a" style="left:1654px;top:194px;width:91px;height:18px;border:1px solid #d9d9d9;background:#f0f0f0"></div>
<div class="a" style="left:1744px;top:194px;width:103px;height:18px;border:1px solid #d9d9d9;background:#f0f0f0"></div>
<div class="a" style="left:1487px;top:212px;width:109px;height:18px;border:1px solid #d9d9d9;background:#f0f0f0"></div>
<div class="a" style="left:1724px;top:212px;width:123px;height:18px;border:1px solid #d9d9d9;background:#f0f0f0"></div>
<div class="n" style="left:1512px;top:197px">View</div>
<div class="n" style="left:1591px;top:197px">Settings</div>
<div class="n" style="left:1679px;top:197px">Labeling</div>
<div class="n" style="left:1769px;top:197px">Load zones</div>
<div class="n" style="left:1510px;top:215px">Scale factors</div>
<div class="n" style="left:1745px;top:215px">Analyze Result 2</div>
<!-- tab content -->
<div class="a" style="left:1485px;top:230px;width:364px;height:524px;background:#fff;border:1px solid #dcdcdc"></div>
<div class="a" style="left:1595px;top:211px;width:130px;height:21px;background:#fff;border:1px solid #dcdcdc;border-bottom:none"></div>
<div class="n" style="left:1620px;top:213px">Analyze Result 1</div>
<div class="grp" style="left:1489px;top:234px;width:114px;height:120px"></div>
<div class="a" style="left:1494px;top:238px;font-size:11.6px;font-weight:bold;white-space:nowrap;letter-spacing:-0.2px;line-height:13px">Axial forces</div>
<div class="a" style="left:1494px;top:250px;font-size:9.5px;white-space:nowrap;line-height:11px;color:#111">Scale</div>
<div class="a gr" style="left:1493px;top:250px;font-size:11px;white-space:nowrap;line-height:12px;width:104px;text-align:right;letter-spacing:-0.4px">Max/Min</div>
<div class="trk" style="left:1497px;top:265px"></div>
<svg class="a" style="left:1517px;top:268px" width="4" height="80"><g fill="#b4b4b4"><rect x="0" y="0" width="3" height="1"/><rect x="0" y="7" width="3" height="1"/><rect x="0" y="15" width="3" height="1"/><rect x="0" y="22" width="3" height="1"/><rect x="0" y="30" width="3" height="1"/><rect x="0" y="37" width="3" height="1"/><rect x="0" y="45" width="3" height="1"/><rect x="0" y="52" width="3" height="1"/><rect x="0" y="60" width="3" height="1"/><rect x="0" y="67" width="3" height="1"/><rect x="0" y="75" width="3" height="1"/></g></svg>
<svg class="a" style="left:1497px;top:339px" width="17" height="10"><path d="M0 0 H12 L16 4.5 L12 9 H0 Z" fill="#0078d7"/></svg>
<div class="inp" style="left:1525px;top:266px">1.00</div>
<div class="inp" style="left:1531px;top:299px">0.00</div>
<div class="a gr" style="left:1535px;top:285px;font-size:11.5px;width:60px;text-align:right;line-height:13px;letter-spacing:-0.3px">3.757</div>
<div class="a gr" style="left:1535px;top:323px;font-size:11.5px;width:60px;text-align:right;line-height:13px;letter-spacing:-0.3px">-6.412</div>
<div class="a" style="left:1526px;top:336px;font-size:11.5px;line-height:13px;letter-spacing:-0.3px">0.0</div>
<div class="grp" style="left:1602px;top:234px;width:114px;height:120px"></div>
<div class="a" style="left:1607px;top:238px;font-size:11.6px;font-weight:bold;white-space:nowrap;letter-spacing:-0.2px;line-height:13px">Shear forces in v</div>
<div class="a" style="left:1607px;top:250px;font-size:9.5px;white-space:nowrap;line-height:11px;color:#111">Scale</div>
<div class="a gr" style="left:1606px;top:250px;font-size:11px;white-space:nowrap;line-height:12px;width:104px;text-align:right;letter-spacing:-0.4px">Max/Min</div>
<div class="trk" style="left:1610px;top:265px"></div>
<svg class="a" style="left:1630px;top:268px" width="4" height="80"><g fill="#b4b4b4"><rect x="0" y="0" width="3" height="1"/><rect x="0" y="7" width="3" height="1"/><rect x="0" y="15" width="3" height="1"/><rect x="0" y="22" width="3" height="1"/><rect x="0" y="30" width="3" height="1"/><rect x="0" y="37" width="3" height="1"/><rect x="0" y="45" width="3" height="1"/><rect x="0" y="52" width="3" height="1"/><rect x="0" y="60" width="3" height="1"/><rect x="0" y="67" width="3" height="1"/><rect x="0" y="75" width="3" height="1"/></g></svg>
<svg class="a" style="left:1610px;top:339px" width="17" height="10"><path d="M0 0 H12 L16 4.5 L12 9 H0 Z" fill="#0078d7"/></svg>
<div class="inp" style="left:1638px;top:266px">1.00</div>
<div class="inp" style="left:1644px;top:299px">0.00</div>
<div class="a gr" style="left:1648px;top:285px;font-size:11.5px;width:60px;text-align:right;line-height:13px;letter-spacing:-0.3px">1.946</div>
<div class="a gr" style="left:1648px;top:323px;font-size:11.5px;width:60px;text-align:right;line-height:13px;letter-spacing:-0.3px">-1.982</div>
<div class="a" style="left:1639px;top:336px;font-size:11.5px;line-height:13px;letter-spacing:-0.3px">0.0</div>
<div class="grp" style="left:1715px;top:234px;width:120px;height:120px"></div>
<div class="a" style="left:1720px;top:238px;font-size:11.6px;font-weight:bold;white-space:nowrap;letter-spacing:-0.2px;line-height:13px">Shear forces in w</div>
<div class="a" style="left:1720px;top:250px;font-size:9.5px;white-space:nowrap;line-height:11px;color:#111">Scale</div>
<div class="a gr" style="left:1719px;top:250px;font-size:11px;white-space:nowrap;line-height:12px;width:104px;text-align:right;letter-spacing:-0.4px">Max/Min</div>
<div class="trk" style="left:1723px;top:265px"></div>
<svg class="a" style="left:1743px;top:268px" width="4" height="80"><g fill="#b4b4b4"><rect x="0" y="0" width="3" height="1"/><rect x="0" y="7" width="3" height="1"/><rect x="0" y="15" width="3" height="1"/><rect x="0" y="22" width="3" height="1"/><rect x="0" y="30" width="3" height="1"/><rect x="0" y="37" width="3" height="1"/><rect x="0" y="45" width="3" height="1"/><rect x="0" y="52" width="3" height="1"/><rect x="0" y="60" width="3" height="1"/><rect x="0" y="67" width="3" height="1"/><rect x="0" y="75" width="3" height="1"/></g></svg>
<svg class="a" style="left:1723px;top:339px" width="17" height="10"><path d="M0 0 H12 L16 4.5 L12 9 H0 Z" fill="#0078d7"/></svg>
<div class="inp" style="left:1751px;top:266px">1.00</div>
<div class="inp" style="left:1757px;top:299px">0.00</div>
<div class="a gr" style="left:1761px;top:285px;font-size:11.5px;width:60px;text-align:right;line-height:13px;letter-spacing:-0.3px">2.754</div>
<div class="a gr" style="left:1761px;top:323px;font-size:11.5px;width:60px;text-align:right;line-height:13px;letter-spacing:-0.3px">-2.605</div>
<div class="a" style="left:1752px;top:336px;font-size:11.5px;line-height:13px;letter-spacing:-0.3px">0.0</div>
<div class="grp" style="left:1489px;top:357px;width:114px;height:120px"></div>
<div class="a" style="left:1494px;top:361px;font-size:11.6px;font-weight:bold;white-space:nowrap;letter-spacing:-0.2px;line-height:13px">Torsional moments</div>
<div class="a" style="left:1494px;top:373px;font-size:9.5px;white-space:nowrap;line-height:11px;color:#111">Scale</div>
<div class="a gr" style="left:1493px;top:373px;font-size:11px;white-space:nowrap;line-height:12px;width:104px;text-align:right;letter-spacing:-0.4px">Max/Min</div>
<div class="trk" style="left:1497px;top:388px"></div>
<svg class="a" style="left:1517px;top:391px" width="4" height="80"><g fill="#b4b4b4"><rect x="0" y="0" width="3" height="1"/><rect x="0" y="7" width="3" height="1"/><rect x="0" y="15" width="3" height="1"/><rect x="0" y="22" width="3" height="1"/><rect x="0" y="30" width="3" height="1"/><rect x="0" y="37" width="3" height="1"/><rect x="0" y="45" width="3" height="1"/><rect x="0" y="52" width="3" height="1"/><rect x="0" y="60" width="3" height="1"/><rect x="0" y="67" width="3" height="1"/><rect x="0" y="75" width="3" height="1"/></g></svg>
<svg class="a" style="left:1497px;top:462px" width="17" height="10"><path d="M0 0 H12 L16 4.5 L12 9 H0 Z" fill="#0078d7"/></svg>
<div class="inp" style="left:1525px;top:389px">1.00</div>
<div class="inp" style="left:1531px;top:422px">0.00</div>
<div class="a gr" style="left:1535px;top:408px;font-size:11.5px;width:60px;text-align:right;line-height:13px;letter-spacing:-0.3px">0.068</div>
<div class="a gr" style="left:1535px;top:446px;font-size:11.5px;width:60px;text-align:right;line-height:13px;letter-spacing:-0.3px">-0.067</div>
<div class="a" style="left:1526px;top:459px;font-size:11.5px;line-height:13px;letter-spacing:-0.3px">0.0</div>
<div class="grp" style="left:1602px;top:357px;width:114px;height:120px"></div>
<div class="a" style="left:1607px;top:361px;font-size:11.6px;font-weight:bold;white-space:nowrap;letter-spacing:-0.2px;line-height:13px">Bend. m.&nbsp; around v</div>
<div class="a" style="left:1607px;top:373px;font-size:9.5px;white-space:nowrap;line-height:11px;color:#111">Scale</div>
<div class="a gr" style="left:1606px;top:373px;font-size:11px;white-space:nowrap;line-height:12px;width:104px;text-align:right;letter-spacing:-0.4px">Max/Min</div>
<div class="trk" style="left:1610px;top:388px"></div>
<svg class="a" style="left:1630px;top:391px" width="4" height="80"><g fill="#b4b4b4"><rect x="0" y="0" width="3" height="1"/><rect x="0" y="7" width="3" height="1"/><rect x="0" y="15" width="3" height="1"/><rect x="0" y="22" width="3" height="1"/><rect x="0" y="30" width="3" height="1"/><rect x="0" y="37" width="3" height="1"/><rect x="0" y="45" width="3" height="1"/><rect x="0" y="52" width="3" height="1"/><rect x="0" y="60" width="3" height="1"/><rect x="0" y="67" width="3" height="1"/><rect x="0" y="75" width="3" height="1"/></g></svg>
<svg class="a" style="left:1610px;top:462px" width="17" height="10"><path d="M0 0 H12 L16 4.5 L12 9 H0 Z" fill="#0078d7"/></svg>
<div class="inp" style="left:1638px;top:389px">1.00</div>
<div class="inp" style="left:1644px;top:422px">0.00</div>
<div class="a gr" style="left:1648px;top:408px;font-size:11.5px;width:60px;text-align:right;line-height:13px;letter-spacing:-0.3px">3.280</div>
<div class="a gr" style="left:1648px;top:446px;font-size:11.5px;width:60px;text-align:right;line-height:13px;letter-spacing:-0.3px">-4.069</div>
<div class="a" style="left:1639px;top:459px;font-size:11.5px;line-height:13px;letter-spacing:-0.3px">0.0</div>
<div class="grp" style="left:1715px;top:357px;width:120px;height:120px"></div>
<div class="a" style="left:1720px;top:361px;font-size:11.6px;font-weight:bold;white-space:nowrap;letter-spacing:-0.2px;line-height:13px">Bend. m.&nbsp; around w</div>
<div class="a" style="left:1720px;top:373px;font-size:9.5px;white-space:nowrap;line-height:11px;color:#111">Scale</div>
<div class="a gr" style="left:1719px;top:373px;font-size:11px;white-space:nowrap;line-height:12px;width:104px;text-align:right;letter-spacing:-0.4px">Max/Min</div>
<div class="trk" style="left:1723px;top:388px"></div>
<svg class="a" style="left:1743px;top:391px" width="4" height="80"><g fill="#b4b4b4"><rect x="0" y="0" width="3" height="1"/><rect x="0" y="7" width="3" height="1"/><rect x="0" y="15" width="3" height="1"/><rect x="0" y="22" width="3" height="1"/><rect x="0" y="30" width="3" height="1"/><rect x="0" y="37" width="3" height="1"/><rect x="0" y="45" width="3" height="1"/><rect x="0" y="52" width="3" height="1"/><rect x="0" y="60" width="3" height="1"/><rect x="0" y="67" width="3" height="1"/><rect x="0" y="75" width="3" height="1"/></g></svg>
<svg class="a" style="left:1723px;top:416px" width="17" height="10"><path d="M0 0 H12 L16 4.5 L12 9 H0 Z" fill="#0078d7"/></svg>
<div class="inp" style="left:1751px;top:389px">1.00</div>
<div class="inp" style="left:1757px;top:422px">0.62</div>
<div class="a gr" style="left:1761px;top:408px;font-size:11.5px;width:60px;text-align:right;line-height:13px;letter-spacing:-0.3px">1.961</div>
<div class="a gr" style="left:1761px;top:446px;font-size:11.5px;width:60px;text-align:right;line-height:13px;letter-spacing:-0.3px">-2.000</div>
<div class="a" style="left:1752px;top:459px;font-size:11.5px;line-height:13px;letter-spacing:-0.3px">0.0</div>
<!-- radio groups -->
<div class="grp" style="left:1558px;top:504px;width:98px;height:53px;border-color:#dcdcdc"></div>
<div class="a" style="left:1564px;top:499px;width:54px;height:10px;background:#fff"></div>
<div class="n" style="left:1566px;top:498px">Axial force</div>
<div class="grp" style="left:1663px;top:504px;width:97px;height:53px;border-color:#dcdcdc"></div>
<div class="a" style="left:1670px;top:499px;width:86px;height:10px;background:#fff"></div>
<div class="n" style="left:1672px;top:498px">Torsional moment</div>
<svg class="a" style="left:1560px;top:510px" width="200" height="45">
<circle cx="12.2" cy="12.8" r="6" fill="#fff" stroke="#333" stroke-width="1"/><circle cx="12.2" cy="12.8" r="3.3" fill="#111"/>
<circle cx="12.2" cy="33.6" r="6" fill="#fff" stroke="#333" stroke-width="1"/>
<circle cx="117.2" cy="12.8" r="6" fill="#fff" stroke="#333" stroke-width="1"/><circle cx="117.2" cy="12.8" r="3.3" fill="#111"/>
<circle cx="117.2" cy="33.6" r="6" fill="#fff" stroke="#333" stroke-width="1"/>
</svg>
<div class="n" style="left:1582px;top:516px">Shown on w</div>
<div class="n" style="left:1582px;top:537px">Shown on v</div>
<div class="n" style="left:1687px;top:516px">Shown on w</div>
<div class="n" style="left:1687px;top:537px">Shown on v</div>
<!-- buttons -->
<div class="a" style="left:1667px;top:599px;width:63px;height:23px;background:#e1e1e1;border:1px solid #adadad"></div>
<div class="n" style="left:1675px;top:604px">All to zero</div>
<div class="a" style="left:1740px;top:599px;width:73px;height:23px;background:#e1e1e1;border:1px solid #adadad"></div>
<div class="n" style="left:1765px;top:604px">Help</div>

<!-- BOTTOM DOCKS -->
<div class="dockt" style="left:62px;top:765px;width:379px;height:18px"></div>
<div class="n" style="left:66px;top:767px;color:#333">Project Explorer</div>
<svg class="a" style="left:395px;top:766px" width="46" height="16"><path d="M2 5 H10 L6 9 Z" fill="#222"/><path d="M19 2.5 H24 M20 2.5 V9 H23 V2.5 M18 9 H25 M21.5 9 V14" stroke="#222" stroke-width="1.2" fill="none"/><path d="M32 3 L40 11 M40 3 L32 11" stroke="#222" stroke-width="1.6"/></svg>
<div class="box" style="left:63px;top:783px;width:189px;height:217px;border-right:2px solid #a0a0a0;border-bottom:2px solid #a0a0a0"></div>
<div class="box" style="left:255px;top:783px;width:186px;height:217px;border-right:2px solid #a0a0a0;border-bottom:2px solid #a0a0a0"></div>
<!-- tree -->
<svg class="a" style="left:66px;top:785px" width="60" height="35">
<path d="M9 5 L12.5 8.5 L9 12 M9 21 L12.5 24.5 L9 28" stroke="#666" stroke-width="1.2" fill="none"/>
<path d="M17 9 H18 M19.5 9 H20.5 M17 25 H18 M19.5 25 H20.5" stroke="#666" stroke-width="1"/>
<rect x="23.5" y="3" width="11" height="11" fill="#f4f4f4" stroke="#1f4e79" stroke-width="1"/>
<rect x="23.5" y="19" width="11" height="11" fill="#fff" stroke="#1f4e79" stroke-width="1"/>
<rect x="25.5" y="21" width="7" height="7" fill="#5ec45e"/>
<rect x="38.5" y="1.5" width="14" height="14" fill="#e8f4e8" stroke="#888" stroke-width="0.8"/>
<path d="M40 14 L51 3" stroke="#00c000" stroke-width="2"/>
<path d="M39 31 Q44 22 52 17.5" stroke="#d00000" stroke-width="2" fill="none"/>
<path d="M42 30 L50 22 M44 31 L52 24" stroke="#f08080" stroke-width="1"/>
</svg>
<div class="n" style="left:125px;top:787px">Model</div>
<div class="n" style="left:125px;top:803px">Result</div>
<!-- list -->
<div class="a" style="left:272px;top:785px;width:1px;height:182px;background:#d0d0d0"></div>
<div class="n" style="left:348px;top:789px">Result (10)</div>
<div class="cb" style="left:281px;top:808px"></div>
<svg class="a" style="left:300px;top:806px" width="17" height="17"><path d="M2 3 L6 5 L8 1 L10 5 L14 3 L12 8 L14 13 L9 11 L7 15 L6 11 L2 12 L4 8 Z" fill="#f07030" stroke="#b03000" stroke-width="0.6"/></svg>
<div class="n" style="left:319px;top:807px">Translational Points</div>
<div class="cb" style="left:281px;top:826px"></div>
<svg class="a" style="left:300px;top:824px" width="17" height="17"><path d="M1 8 Q1 3 5 3 Q7 0 10 2 Q15 2 14 7 Q16 11 12 12 Q10 15 6 13 Q1 14 2 10 Z" fill="#f07030" stroke="#a02800" stroke-width="0.8"/><circle cx="8" cy="8" r="2" fill="#fff"/></svg>
<div class="n" style="left:319px;top:825px">Rotational Points</div>
<div class="cb" style="left:281px;top:844px"></div>
<svg class="a" style="left:282px;top:845px" width="12" height="12"><path d="M2 6 L4.8 9 L10 2.5" stroke="#333" stroke-width="1.3" fill="none"/></svg>
<svg class="a" style="left:300px;top:842px" width="17" height="17"><path d="M2 13 L12 2 L15 4.5 L5 15.5 Z" fill="#f08040" stroke="#c04000" stroke-width="0.8"/></svg>
<div class="n" style="left:319px;top:843px">Beam Links</div>
<div class="cb" style="left:281px;top:862px"></div>
<svg class="a" style="left:282px;top:863px" width="12" height="12"><path d="M2 6 L4.8 9 L10 2.5" stroke="#333" stroke-width="1.3" fill="none"/></svg>
<svg class="a" style="left:300px;top:860px" width="17" height="17"><path d="M3 15 L13 1" stroke="#f08040" stroke-width="1.4"/></svg>
<div class="n" style="left:319px;top:861px">Axial Force Links</div>
<div class="cb" style="left:281px;top:880px"></div>
<svg class="a" style="left:300px;top:878px" width="17" height="17"><path d="M2 14 L14 2" stroke="#555" stroke-width="0.8" stroke-dasharray="2 1"/><circle cx="2.5" cy="13.5" r="1.4" fill="#f06020"/><circle cx="13.5" cy="2.5" r="1.2" fill="#f06020"/><circle cx="8" cy="8" r="1.2" fill="#333"/></svg>
<div class="n" style="left:319px;top:879px">T-Elements</div>
<div class="cb" style="left:281px;top:898px"></div>
<svg class="a" style="left:300px;top:896px" width="17" height="17"><path d="M4 1 H14 V4 H8 V7 H13 V10 H8 V13 H14 V16 H4 Z" fill="#f07030" stroke="#b04000" stroke-width="0.6"/></svg>
<div class="n" style="left:319px;top:897px">Materials</div>
<div class="cb" style="left:281px;top:916px"></div>
<svg class="a" style="left:300px;top:914px" width="17" height="17"><path d="M2 15 Q4 4 12 2 L15 4" stroke="#f07030" stroke-width="2.2" fill="none"/></svg>
<div class="n" style="left:319px;top:915px">Cross Sections</div>
<div class="cb" style="left:281px;top:934px"></div>
<svg class="a" style="left:300px;top:932px" width="17" height="17"><path d="M2 14 L13 3 V14 Z" fill="#f07030" stroke="#b04000" stroke-width="0.8"/></svg>
<div class="n" style="left:319px;top:933px">Angles</div>
<div class="cb" style="left:281px;top:952px"></div>
<svg class="a" style="left:300px;top:950px" width="17" height="17"><path d="M1.5 2 L9 3.5 L11.5 14.5 M9.5 13 L11.5 15 L13 12.5" stroke="#a00000" stroke-width="1" fill="none"/><path d="M1 1 L3 3" stroke="#a00000" stroke-width="1"/><circle cx="10" cy="5" r="2.3" fill="#f07030" stroke="#a02000" stroke-width="0.6"/></svg>
<div class="n" style="left:319px;top:951px">Roll Elements</div>
<!-- list scrollbars -->
<div class="a" style="left:422px;top:785px;width:16px;height:196px;background:#f0f0f0"></div>
<div class="a" style="left:423px;top:821px;width:14px;height:159px;background:#cdcdcd"></div>
<svg class="a" style="left:422px;top:785px" width="16" height="16"><path d="M4.5 10 L8 6.5 L11.5 10" stroke="#606060" stroke-width="1.4" fill="none"/></svg>
<div class="a" style="left:258px;top:981px;width:164px;height:16px;background:#f0f0f0"></div>
<div class="a" style="left:275px;top:982px;width:98px;height:14px;background:#cdcdcd"></div>
<svg class="a" style="left:258px;top:981px" width="180" height="16"><path d="M9.5 4.5 L6 8 L9.5 11.5" stroke="#c0c0c0" stroke-width="1.3" fill="none"/><path d="M151.5 4.5 L155 8 L151.5 11.5" stroke="#606060" stroke-width="1.4" fill="none"/><path d="M167 6 L170.5 9.5 L174 6" stroke="#606060" stroke-width="1.4" fill="none"/></svg>

<!-- console -->
<div class="dockt" style="left:446px;top:765px;width:1410px;height:18px"></div>
<div class="n" style="left:450px;top:767px;color:#333">Console</div>
<svg class="a" style="left:1810px;top:766px" width="46" height="16"><path d="M2 5 H10 L6 9 Z" fill="#222"/><path d="M19 2.5 H24 M20 2.5 V9 H23 V2.5 M18 9 H25 M21.5 9 V14" stroke="#222" stroke-width="1.2" fill="none"/><path d="M32 3 L40 11 M40 3 L32 11" stroke="#222" stroke-width="1.6"/></svg>
<div class="a" style="left:446px;top:783px;width:1410px;height:217px;background:#f0f0f0;border-right:2px solid #a0a0a0;border-bottom:2px solid #a0a0a0"></div>
<div class="box" style="left:452px;top:788px;width:1397px;height:207px"></div>
<div class="mono" style="left:456px;top:792px">Bm_Chk:  No. of elements:               4244
Bm_Chk:  No. of Kofak-points:           2713
Bm_Chk:  New scale factor:             0.695
Bm_Chk: Time of calculation:            0.07s
Bm_Chk: Version 2020.18 done.
Beam Editor: Loading Result "wind1"
Beam Editor: Loading Load Case "wind2"
Beam Editor: Loading Result "wind2"
Beam Editor: BEAM3D.STA completed.</div>
<div class="a" style="left:1833px;top:790px;width:15px;height:187px;background:#f0f0f0"></div>
<div class="a" style="left:1833px;top:942px;width:15px;height:17px;background:#cdcdcd"></div>
<svg class="a" style="left:1833px;top:790px" width="15" height="187"><path d="M4 11 L7.5 7.5 L11 11" stroke="#404040" stroke-width="1.6" fill="none"/><path d="M4 175 L7.5 178.5 L11 175" stroke="#404040" stroke-width="1.6" fill="none"/></svg>
<div class="a" style="left:454px;top:977px;width:1379px;height:16px;background:#f0f0f0"></div>
<svg class="a" style="left:454px;top:977px" width="1379" height="16"><path d="M10 4.5 L6.5 8 L10 11.5" stroke="#c0c0c0" stroke-width="1.3" fill="none"/><path d="M1368 4.5 L1371.5 8 L1368 11.5" stroke="#c0c0c0" stroke-width="1.3" fill="none"/></svg>

<!-- status bar -->
<div class="a" style="left:62px;top:1000px;width:1795px;height:1px;background:#dadada"></div>
<div class="a" style="left:212px;top:1003px;width:1px;height:18px;background:#d8d8d8"></div>
<div class="a" style="left:662px;top:1003px;width:1px;height:18px;background:#d8d8d8"></div>
<div class="a" style="left:962px;top:1003px;width:1px;height:18px;background:#d8d8d8"></div>
<svg class="a" style="left:1842px;top:1008px" width="14" height="14"><g fill="#b0b0b0"><rect x="9" y="1" width="2" height="2"/><rect x="6" y="4" width="2" height="2"/><rect x="9" y="4" width="2" height="2"/><rect x="3" y="7" width="2" height="2"/><rect x="6" y="7" width="2" height="2"/><rect x="9" y="7" width="2" height="2"/></g></svg>

</body></html>
